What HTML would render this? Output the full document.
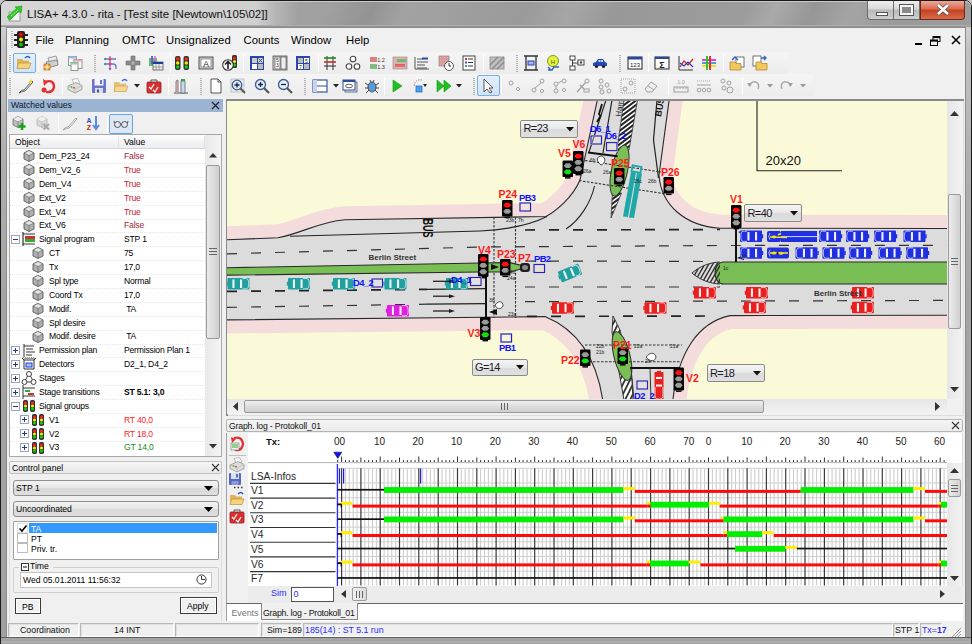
<!DOCTYPE html>
<html><head><meta charset="utf-8">
<style>
*{margin:0;padding:0;box-sizing:border-box}
html,body{width:972px;height:644px;overflow:hidden;background:#c6c6c6;font-family:"Liberation Sans",sans-serif;position:relative}
.a{position:absolute}
.t{white-space:nowrap;line-height:1;color:#000}
svg{overflow:visible}
svg text{font-family:"Liberation Sans",sans-serif}
</style></head><body>
<div class="a" style="left:0px;top:0px;width:972px;height:644px;background:linear-gradient(#dcdcdc,#d4d4d4 20px,#c4c4c4 45px,#b0b0b0 150px,#a4a4a4 300px,#a0a0a0);border:1px solid #1a1a1a;border-radius:7px 7px 0 0"></div>
<div class="a" style="left:1px;top:1px;width:970px;height:26px;background:linear-gradient(115deg,#a8a8a8 0,#a0a0a0 300px,#939393 340px,#a2a2a2 370px,#9a9a9a 480px,#a6a6a6 520px,#989898 560px,#9c9c9c 680px,#aaaaaa 705px,#969696 740px,#a4a4a4 775px,#9a9a9a 820px,#a0a0a0 972px);border-radius:6px 6px 0 0;box-shadow:inset 0 1px 0 #c8c8c8"></div>
<div class="a" style="left:1px;top:1px;width:300px;height:26px;background:linear-gradient(90deg,rgba(214,214,214,1) 0,rgba(210,210,210,.95) 255px,rgba(200,200,200,.5) 275px,rgba(160,160,160,0) 298px);border-radius:6px 0 0 0"></div>
<div class="a" style="left:1px;top:25px;width:970px;height:2px;background:linear-gradient(#b8b8b8,#8a8a8a)"></div>
<div class="a" style="left:867px;top:1px;width:27px;height:19px;background:linear-gradient(#eeeeee,#d8d8d8 45%,#b9b9b9 50%,#cfcfcf);border:1px solid #6c6c6c;border-top:none;border-radius:0 0 0 4px"></div>
<div class="a" style="left:876px;top:12px;width:12px;height:4px;background:#fff;border:1px solid #555"></div>
<div class="a" style="left:893px;top:1px;width:27px;height:19px;background:linear-gradient(#eeeeee,#d8d8d8 45%,#b9b9b9 50%,#cfcfcf);border:1px solid #6c6c6c;border-top:none"></div>
<div class="a" style="left:900px;top:5px;width:13px;height:10px;background:#8a8a8a;border:2px solid #f4f4f4;box-shadow:0 0 0 1px #555"></div>
<div class="a" style="left:920px;top:1px;width:45px;height:19px;background:linear-gradient(#eba99b,#dc6a50 45%,#c5401f 50%,#d76b4d);border:1px solid #70281a;border-top:none;border-radius:0 0 4px 0"></div>
<svg class="a" style="left:936px;top:3px" width="14" height="13" viewBox="0 0 14 13"><path d="M2 2 L12 11 M12 2 L2 11" stroke="#555" stroke-width="4.2"/><path d="M2 2 L12 11 M12 2 L2 11" stroke="#fff" stroke-width="2.6"/></svg>
<svg class="a" style="left:7px;top:6px" width="17" height="16" viewBox="0 0 17 16"><rect x="2" y="6" width="11" height="9" fill="#f2f2f2" stroke="#888" stroke-width=".8"/><path d="M0 11 L10 2 L8 1 L15 0 L14 7 L12 5 L3 14 Z" fill="#2ecc22" stroke="#1a9a10" stroke-width=".6"/><path d="M4 10 L11 4" stroke="#bff5b0" stroke-width="1" stroke-dasharray="2 1.5"/></svg>
<div class="a t" style="left:27px;top:8.5px;font-size:11.5px;color:#111">LISA+ 4.3.0 - rita - [Test site [Newtown\105\02]]</div>
<div class="a" style="left:6px;top:27px;width:960px;height:612px;background:#f0f0f0;border:1px solid #8a8a8a;border-bottom:none"></div>
<div class="a" style="left:7px;top:28px;width:958px;height:22px;background:#f0f0f0"></div>
<svg class="a" style="left:10px;top:31px" width="5" height="17" viewBox="0 0 5 17"><rect x="1" y="0" width="2" height="1" fill="#b8b8b8"/><rect x="1" y="2" width="2" height="1" fill="#b8b8b8"/><rect x="1" y="4" width="2" height="1" fill="#b8b8b8"/><rect x="1" y="6" width="2" height="1" fill="#b8b8b8"/><rect x="1" y="8" width="2" height="1" fill="#b8b8b8"/><rect x="1" y="10" width="2" height="1" fill="#b8b8b8"/><rect x="1" y="12" width="2" height="1" fill="#b8b8b8"/><rect x="1" y="14" width="2" height="1" fill="#b8b8b8"/><rect x="1" y="16" width="2" height="1" fill="#b8b8b8"/></svg>
<svg class="a" style="left:14px;top:30px" width="14" height="19" viewBox="0 0 14 19"><rect x="3" y="1" width="8" height="17" rx="2" fill="#222"/><rect x="0" y="4" width="14" height="2" fill="#222"/><rect x="0" y="9" width="14" height="2" fill="#222"/><rect x="0" y="14" width="14" height="2" fill="#222"/><circle cx="7" cy="4.5" r="2" fill="#f00"/><circle cx="7" cy="9.5" r="2" fill="#ee0"/><circle cx="7" cy="14.5" r="2" fill="#0c0"/></svg>
<div class="a t" style="left:35.5px;top:34.5px;font-size:11.3px;">File</div>
<div class="a t" style="left:65px;top:34.5px;font-size:11.3px;">Planning</div>
<div class="a t" style="left:122px;top:34.5px;font-size:11.3px;">OMTC</div>
<div class="a t" style="left:166px;top:34.5px;font-size:11.3px;">Unsignalized</div>
<div class="a t" style="left:243.5px;top:34.5px;font-size:11.3px;">Counts</div>
<div class="a t" style="left:291px;top:34.5px;font-size:11.3px;">Window</div>
<div class="a t" style="left:346px;top:34.5px;font-size:11.3px;">Help</div>
<div class="a" style="left:915px;top:43px;width:7px;height:2px;background:#000"></div>
<svg class="a" style="left:930px;top:36px" width="11" height="10" viewBox="0 0 11 10"><rect x="3" y="0.5" width="7" height="5" fill="none" stroke="#000" stroke-width="1"/><rect x="3" y="0.5" width="7" height="1.6" fill="#000"/><rect x="0.5" y="4" width="7" height="5.5" fill="#f0f0f0" stroke="#000" stroke-width="1"/><rect x="0.5" y="4" width="7" height="1.6" fill="#000"/></svg>
<svg class="a" style="left:951px;top:35px" width="10" height="10" viewBox="0 0 10 10"><path d="M1 1 L9 9 M9 1 L1 9" stroke="#000" stroke-width="1.6"/></svg>
<div class="a" style="left:7px;top:51px;width:958px;height:1px;background:#f0f0f0"></div>
<div class="a" style="left:8px;top:52px;width:780px;height:22px;background:linear-gradient(#f5f5f5,#ececec)"></div>
<div class="a" style="left:8px;top:74px;width:805px;height:22px;background:linear-gradient(#f5f5f5,#ececec)"></div>
<div class="a" style="left:13px;top:53px;width:23px;height:20px;background:linear-gradient(#e4f0fb,#cfe3f7);border:1px solid #7aaee0;border-radius:2px"></div>
<div class="a" style="left:477px;top:75px;width:23px;height:21px;background:linear-gradient(#e4f0fb,#cfe3f7);border:1px solid #7aaee0;border-radius:2px"></div>
<svg class="a" style="left:8px;top:54px" width="4" height="18" viewBox="0 0 4 18"><rect x="1" y="1" width="2" height="1" fill="#b0b0b0"/><rect x="1" y="3" width="2" height="1" fill="#b0b0b0"/><rect x="1" y="5" width="2" height="1" fill="#b0b0b0"/><rect x="1" y="7" width="2" height="1" fill="#b0b0b0"/><rect x="1" y="9" width="2" height="1" fill="#b0b0b0"/><rect x="1" y="11" width="2" height="1" fill="#b0b0b0"/><rect x="1" y="13" width="2" height="1" fill="#b0b0b0"/><rect x="1" y="15" width="2" height="1" fill="#b0b0b0"/><rect x="1" y="17" width="2" height="1" fill="#b0b0b0"/></svg>
<svg class="a" style="left:16px;top:55px" width="16" height="16" viewBox="0 0 16 16"><path d="M1 4 L6 4 L7 5.5 L13 5.5 L13 13 L1 13Z" fill="#e0b45a"/><path d="M2.5 8 L15 8 L13 13.5 L1 13.5Z" fill="#f6d37e" stroke="#c0902e" stroke-width=".7"/><path d="M9 3 Q12 0 14 3" stroke="#2a5ad8" fill="none" stroke-width="1.4"/></svg>
<div class="a" style="left:38px;top:54px;width:1px;height:18px;background:#c4c4c4;border-right:1px solid #fff"></div>
<svg class="a" style="left:43px;top:55px" width="16" height="16" viewBox="0 0 16 16"><path d="M5 3 L13 1 L15 7 L7 10Z" fill="#e8e8e8" stroke="#888" stroke-width=".8"/><path d="M3 7 L14 5 L15 10 L5 13Z" fill="#cfcfcf" stroke="#777" stroke-width=".8"/><rect x="1" y="9" width="6" height="6" fill="#f0a030" stroke="#a06010" stroke-width=".6"/><path d="M4 9 V15 M1 12 H7" stroke="#fff" stroke-width=".8"/></svg>
<svg class="a" style="left:67px;top:55px" width="16" height="16" viewBox="0 0 16 16"><rect x="1.5" y="1.5" width="8" height="9" fill="#f4f6fb" stroke="#8a8a8a" stroke-width=".9"/><rect x="1.5" y="1.5" width="8" height="2" fill="#a8b8e8"/><rect x="7" y="4.5" width="8" height="9" fill="#fbf4f6" stroke="#8a8a8a" stroke-width=".9"/><rect x="7" y="4.5" width="8" height="2" fill="#e8a8c0"/><rect x="4" y="7.5" width="7" height="8" fill="#f8fbf6" stroke="#8a8a8a" stroke-width=".9"/><rect x="4" y="7.5" width="7" height="2" fill="#90d890"/></svg>
<svg class="a" style="left:93px;top:54px" width="4" height="18" viewBox="0 0 4 18"><rect x="1" y="1" width="2" height="1" fill="#b0b0b0"/><rect x="1" y="3" width="2" height="1" fill="#b0b0b0"/><rect x="1" y="5" width="2" height="1" fill="#b0b0b0"/><rect x="1" y="7" width="2" height="1" fill="#b0b0b0"/><rect x="1" y="9" width="2" height="1" fill="#b0b0b0"/><rect x="1" y="11" width="2" height="1" fill="#b0b0b0"/><rect x="1" y="13" width="2" height="1" fill="#b0b0b0"/><rect x="1" y="15" width="2" height="1" fill="#b0b0b0"/><rect x="1" y="17" width="2" height="1" fill="#b0b0b0"/></svg>
<svg class="a" style="left:102px;top:55px" width="16" height="16" viewBox="0 0 16 16"><path d="M8 1 V15 M2 4 H14 M2 9 H11 Q14 9 14 12 V14" stroke="#6a78c8" fill="none" stroke-width="1.3"/><path d="M2 4 L4 2.5 V5.5Z M2 9 L4 7.5 V10.5Z" fill="#1aa0a0"/><circle cx="8" cy="4" r="1.6" fill="#f04060"/><circle cx="8" cy="9" r="1.6" fill="#f04060"/><path d="M6.5 13 L8 15.5 L9.5 13Z" fill="#a040c0"/></svg>
<svg class="a" style="left:125px;top:55px" width="16" height="16" viewBox="0 0 16 16"><path d="M6 1 H10 V6 H15 V10 H10 V15 H6 V10 H1 V6 H6Z" fill="#8a8a8a" stroke="#6a6a6a" stroke-width=".6"/><rect x="6.5" y="6.5" width="3" height="3" fill="#b0b0b0"/></svg>
<svg class="a" style="left:148px;top:55px" width="16" height="16" viewBox="0 0 16 16"><path d="M1 3 H9 V11 H1Z" fill="#60c060"/><path d="M4 1 V9" stroke="#6060e0" stroke-width="2"/><path d="M7 1 V9" stroke="#e060e0" stroke-width="1.5"/><rect x="5" y="7" width="10" height="8" fill="#eee" stroke="#555" stroke-width=".8"/><rect x="5" y="7" width="10" height="2" fill="#2040a0"/><path d="M8 9 V15 M11 9 V15 M5 12 H15" stroke="#777" stroke-width=".6"/></svg>
<div class="a" style="left:170px;top:54px;width:1px;height:18px;background:#c4c4c4;border-right:1px solid #fff"></div>
<svg class="a" style="left:174px;top:55px" width="16" height="16" viewBox="0 0 16 16"><rect x="1" y="1" width="5.5" height="14" rx="2" fill="#333"/><rect x="9.5" y="1" width="5.5" height="14" rx="2" fill="#333"/><circle cx="3.7" cy="4" r="1.7" fill="#f22"/><circle cx="3.7" cy="8" r="1.7" fill="#ee0"/><circle cx="3.7" cy="12" r="1.7" fill="#1c1"/><circle cx="12.3" cy="4" r="1.7" fill="#f22"/><circle cx="12.3" cy="8" r="1.7" fill="#ee0"/><circle cx="12.3" cy="12" r="1.7" fill="#1c1"/></svg>
<svg class="a" style="left:198px;top:55px" width="16" height="16" viewBox="0 0 16 16"><rect x="1" y="2" width="14" height="12" fill="#d0d0d0" stroke="#555" stroke-width="1"/><rect x="3" y="4" width="10" height="8" fill="#fff" stroke="#666" stroke-width=".6"/><text x="8" y="11.5" font-size="8.5" text-anchor="middle" font-family="Liberation Sans" fill="#222">A</text></svg>
<svg class="a" style="left:222px;top:55px" width="16" height="16" viewBox="0 0 16 16"><rect x="10" y="0" width="5" height="13" rx="1.5" fill="#333"/><circle cx="12.5" cy="3" r="1.6" fill="#f22"/><circle cx="12.5" cy="6.5" r="1.6" fill="#ee0"/><circle cx="12.5" cy="10" r="1.6" fill="#1c1"/><circle cx="6" cy="10" r="5.3" fill="#fff" stroke="#333" stroke-width="1.1"/><path d="M6 14 V7 M3 9.5 L6 6.5 L9 9.5" stroke="#222" stroke-width="1.6" fill="none"/></svg>
<div class="a" style="left:243px;top:54px;width:1px;height:18px;background:#c4c4c4;border-right:1px solid #fff"></div>
<svg class="a" style="left:249px;top:55px" width="16" height="16" viewBox="0 0 16 16"><rect x="1" y="1" width="14" height="14" fill="#2848a8"/><rect x="3" y="3" width="5" height="5" fill="#ccc"/><rect x="9" y="3" width="5" height="5" fill="#ddd"/><rect x="3" y="9" width="5" height="5" fill="#fff"/><rect x="9" y="9" width="5" height="5" fill="#bbb"/><path d="M9.5 3.5 L13.5 7.5 M13.5 3.5 L9.5 7.5" stroke="#222" stroke-width=".8"/></svg>
<svg class="a" style="left:272px;top:55px" width="16" height="16" viewBox="0 0 16 16"><rect x="1" y="1" width="14" height="14" fill="#ccc" stroke="#555" stroke-width=".8"/><rect x="3" y="2" width="5" height="12" fill="#fff" stroke="#444" stroke-width=".6"/><rect x="9" y="2" width="5" height="12" fill="#eee" stroke="#444" stroke-width=".6"/><text x="5.5" y="7" font-size="5" text-anchor="middle" fill="#222">5</text><text x="5.5" y="12" font-size="5" text-anchor="middle" fill="#222">3</text></svg>
<svg class="a" style="left:295px;top:55px" width="16" height="16" viewBox="0 0 16 16"><rect x="1" y="1" width="14" height="14" fill="#2848a8"/><rect x="3" y="3" width="5" height="5" fill="#bbb"/><rect x="9" y="3" width="5" height="5" fill="#fff"/><rect x="3" y="9" width="5" height="5" fill="#fff"/><rect x="9" y="9" width="5" height="5" fill="#bbb"/><text x="11.5" y="7.6" font-size="5" text-anchor="middle" fill="#222">5</text><text x="5.5" y="13.6" font-size="5" text-anchor="middle" fill="#222">7</text></svg>
<div class="a" style="left:318px;top:54px;width:1px;height:18px;background:#c4c4c4;border-right:1px solid #fff"></div>
<svg class="a" style="left:322px;top:55px" width="16" height="16" viewBox="0 0 16 16"><path d="M2 3 H14 M2 7 H14 M2 11 H14 M5 1 V15 M11 1 V15" stroke="#2a2a2a" stroke-width="1"/><path d="M2 3 H14" stroke="#30a030" stroke-width="1.6"/><path d="M2 7 H14" stroke="#e04040" stroke-width="1.4"/></svg>
<svg class="a" style="left:345px;top:55px" width="16" height="16" viewBox="0 0 16 16"><circle cx="8" cy="4" r="2.8" fill="#fff" stroke="#444" stroke-width="1.1"/><circle cx="4" cy="11.5" r="2.8" fill="#fff" stroke="#444" stroke-width="1.1"/><circle cx="12" cy="11.5" r="2.8" fill="#fff" stroke="#444" stroke-width="1.1"/></svg>
<svg class="a" style="left:369px;top:55px" width="16" height="16" viewBox="0 0 16 16"><rect x="1" y="2" width="7" height="5" fill="#e08080"/><rect x="1" y="9" width="7" height="5" fill="#80c080"/><path d="M1 4 H8 M1 11 H8" stroke="#999" stroke-width=".6"/><text x="12" y="7" font-size="5.5" text-anchor="middle" fill="#333">1.2</text><text x="12" y="14" font-size="5.5" text-anchor="middle" fill="#333">1.3</text></svg>
<svg class="a" style="left:392px;top:55px" width="16" height="16" viewBox="0 0 16 16"><rect x="1" y="2" width="14" height="12" fill="#e8b0b0" stroke="#888" stroke-width=".6"/><rect x="5" y="4" width="9" height="3" fill="#60c060"/><rect x="3" y="9" width="10" height="3" fill="#e06060"/><path d="M1 5 H15 M1 8 H15 M1 11 H15" stroke="#aaa" stroke-width=".5"/></svg>
<svg class="a" style="left:414px;top:55px" width="16" height="16" viewBox="0 0 16 16"><path d="M1 2 V14 H15" stroke="#555" stroke-width="1" fill="none"/><path d="M3 4 H9 M3 7 H14 M3 10 H11 M3 13 H13" stroke="#555" stroke-width="1"/><rect x="8" y="2.5" width="6" height="2" fill="#2a4aa8"/></svg>
<svg class="a" style="left:438px;top:55px" width="16" height="16" viewBox="0 0 16 16"><rect x="1" y="1" width="10" height="10" fill="#e8a0a0" stroke="#777" stroke-width=".6"/><path d="M1 4 H11 M1 7 H11" stroke="#999" stroke-width=".5"/><circle cx="11" cy="11" r="4.5" fill="#fff" stroke="#555" stroke-width="1"/><path d="M11 8 V11 H13" stroke="#333" stroke-width="1" fill="none"/></svg>
<svg class="a" style="left:461px;top:55px" width="16" height="16" viewBox="0 0 16 16"><rect x="2" y="1" width="12" height="14" fill="#fff" stroke="#444" stroke-width="1"/><path d="M7 4 H12 M7 7.5 H12 M7 11 H12" stroke="#333" stroke-width="1"/><rect x="4" y="3" width="2" height="2" fill="#d03030"/><rect x="4" y="6.5" width="2" height="2" fill="#3050d0"/><rect x="4" y="10" width="2" height="2" fill="#30a0a0"/></svg>
<div class="a" style="left:483px;top:54px;width:1px;height:18px;background:#c4c4c4;border-right:1px solid #fff"></div>
<svg class="a" style="left:489px;top:55px" width="16" height="16" viewBox="0 0 16 16"><rect x="1" y="2" width="14" height="12" fill="#c0c0c0" stroke="#888" stroke-width=".8"/><path d="M1 10 L9 2 M3 14 L15 2 M8 14 L15 7" stroke="#888" stroke-width="1.3"/></svg>
<svg class="a" style="left:515px;top:54px" width="4" height="18" viewBox="0 0 4 18"><rect x="1" y="1" width="2" height="1" fill="#b0b0b0"/><rect x="1" y="3" width="2" height="1" fill="#b0b0b0"/><rect x="1" y="5" width="2" height="1" fill="#b0b0b0"/><rect x="1" y="7" width="2" height="1" fill="#b0b0b0"/><rect x="1" y="9" width="2" height="1" fill="#b0b0b0"/><rect x="1" y="11" width="2" height="1" fill="#b0b0b0"/><rect x="1" y="13" width="2" height="1" fill="#b0b0b0"/><rect x="1" y="15" width="2" height="1" fill="#b0b0b0"/><rect x="1" y="17" width="2" height="1" fill="#b0b0b0"/></svg>
<svg class="a" style="left:523px;top:55px" width="16" height="16" viewBox="0 0 16 16"><path d="M1 1 H15 M1 15 H15 M3 1 V15 M13 1 V15" stroke="#333" stroke-width="1.3"/><rect x="5" y="6" width="6" height="4" fill="#a0b8f0" stroke="#2040c0" stroke-width="1"/></svg>
<svg class="a" style="left:545px;top:55px" width="16" height="16" viewBox="0 0 16 16"><circle cx="8" cy="6" r="5.5" fill="#e8f040" stroke="#7a9a20" stroke-width="1"/><text x="8" y="8.5" font-size="6" text-anchor="middle" fill="#2a6a20">H</text><path d="M3 12 L6 15 M3 15 H7 L9 12 H14" stroke="#3060c0" stroke-width="1.4" fill="none"/></svg>
<svg class="a" style="left:569px;top:55px" width="16" height="16" viewBox="0 0 16 16"><rect x="1" y="1" width="5" height="4" fill="#fff" stroke="#333" stroke-width=".9"/><rect x="9" y="5" width="6" height="5" fill="#fff" stroke="#333" stroke-width=".9"/><rect x="1" y="11" width="5" height="4" fill="#fff" stroke="#333" stroke-width=".9"/><path d="M3.5 5 V11 M3.5 8 H9" stroke="#333" stroke-width=".9"/><circle cx="12" cy="7.5" r="1.2" fill="#444"/></svg>
<svg class="a" style="left:592px;top:55px" width="16" height="16" viewBox="0 0 16 16"><path d="M1 11 V8 L4 7 L6 4 H11 L13 7 L15 8 V11Z" fill="#2848b8"/><rect x="6.5" y="5" width="2" height="2" fill="#cde"/><rect x="9" y="5" width="2" height="2" fill="#cde"/><circle cx="4.5" cy="11.5" r="1.6" fill="#222"/><circle cx="11.5" cy="11.5" r="1.6" fill="#222"/></svg>
<svg class="a" style="left:618px;top:54px" width="4" height="18" viewBox="0 0 4 18"><rect x="1" y="1" width="2" height="1" fill="#b0b0b0"/><rect x="1" y="3" width="2" height="1" fill="#b0b0b0"/><rect x="1" y="5" width="2" height="1" fill="#b0b0b0"/><rect x="1" y="7" width="2" height="1" fill="#b0b0b0"/><rect x="1" y="9" width="2" height="1" fill="#b0b0b0"/><rect x="1" y="11" width="2" height="1" fill="#b0b0b0"/><rect x="1" y="13" width="2" height="1" fill="#b0b0b0"/><rect x="1" y="15" width="2" height="1" fill="#b0b0b0"/><rect x="1" y="17" width="2" height="1" fill="#b0b0b0"/></svg>
<svg class="a" style="left:627px;top:55px" width="16" height="16" viewBox="0 0 16 16"><rect x="1" y="2" width="14" height="12" fill="#fff" stroke="#333" stroke-width="1.1"/><rect x="1" y="2" width="14" height="2.5" fill="#2848a8"/><text x="8" y="12" font-size="6" text-anchor="middle" fill="#222">123</text></svg>
<div class="a" style="left:648px;top:54px;width:1px;height:18px;background:#c4c4c4;border-right:1px solid #fff"></div>
<svg class="a" style="left:654px;top:55px" width="16" height="16" viewBox="0 0 16 16"><rect x="1" y="2" width="14" height="12" fill="#fff" stroke="#333" stroke-width="1.1"/><rect x="1" y="2" width="14" height="2" fill="#2848a8"/><text x="8" y="13" font-size="9" font-weight="bold" text-anchor="middle" fill="#222">Σ</text></svg>
<svg class="a" style="left:678px;top:55px" width="16" height="16" viewBox="0 0 16 16"><path d="M1 1 V15 H15" stroke="#333" stroke-width="1" fill="none"/><path d="M2 12 L6 6 L10 10 L15 4" stroke="#d02020" stroke-width="1.2" fill="none"/><path d="M2 8 L6 11 L10 7 L15 12" stroke="#2040c0" stroke-width="1.2" fill="none"/></svg>
<svg class="a" style="left:701px;top:55px" width="16" height="16" viewBox="0 0 16 16"><path d="M1 5 H15" stroke="#e040e0" stroke-width="2"/><path d="M1 8 H15" stroke="#40a0e0" stroke-width="2"/><path d="M1 11 H15" stroke="#f0e020" stroke-width="2"/><path d="M6 1 V15" stroke="#30c030" stroke-width="2"/><path d="M9 1 V15" stroke="#e03030" stroke-width="2"/></svg>
<div class="a" style="left:723px;top:54px;width:1px;height:18px;background:#c4c4c4;border-right:1px solid #fff"></div>
<svg class="a" style="left:729px;top:55px" width="16" height="16" viewBox="0 0 16 16"><rect x="7" y="2" width="8" height="10" fill="#fff" stroke="#555" stroke-width=".8"/><path d="M1 7 H6 L7 8.5 H12 V15 H1Z" fill="#f0c860" stroke="#b08020" stroke-width=".7"/><path d="M3 5 L6 2 L9 5" stroke="#3060d0" stroke-width="1.3" fill="none"/></svg>
<svg class="a" style="left:752px;top:55px" width="16" height="16" viewBox="0 0 16 16"><rect x="1" y="1" width="8" height="10" fill="#fff" stroke="#555" stroke-width=".8"/><path d="M4 7 H9 L10 8.5 H15 V15 H4Z" fill="#f0c860" stroke="#b08020" stroke-width=".7"/><path d="M9 3 H14 M12 1 L14 3 L12 5" stroke="#3060d0" stroke-width="1.3" fill="none"/></svg>
<svg class="a" style="left:8px;top:76.5px" width="4" height="18" viewBox="0 0 4 18"><rect x="1" y="1" width="2" height="1" fill="#b0b0b0"/><rect x="1" y="3" width="2" height="1" fill="#b0b0b0"/><rect x="1" y="5" width="2" height="1" fill="#b0b0b0"/><rect x="1" y="7" width="2" height="1" fill="#b0b0b0"/><rect x="1" y="9" width="2" height="1" fill="#b0b0b0"/><rect x="1" y="11" width="2" height="1" fill="#b0b0b0"/><rect x="1" y="13" width="2" height="1" fill="#b0b0b0"/><rect x="1" y="15" width="2" height="1" fill="#b0b0b0"/><rect x="1" y="17" width="2" height="1" fill="#b0b0b0"/></svg>
<svg class="a" style="left:18px;top:78px" width="16" height="16" viewBox="0 0 16 16"><path d="M1 15 Q4 11 6 12 L14 3 L15 4 L7 13 Q5 13 1 15" fill="#fff" stroke="#444" stroke-width=".9"/><path d="M11 5 L14 2" stroke="#f0e020" stroke-width="2"/></svg>
<svg class="a" style="left:40px;top:78px" width="16" height="16" viewBox="0 0 16 16"><path d="M5 4 Q14 1 14 9 Q13 15 6 14" stroke="#e03030" stroke-width="2.4" fill="none"/><path d="M3 1 L8 4 L4 8Z" fill="#e03030"/><circle cx="4" cy="12" r="2.5" fill="#e03030"/></svg>
<div class="a" style="left:62px;top:76.5px;width:1px;height:18px;background:#c4c4c4;border-right:1px solid #fff"></div>
<svg class="a" style="left:67px;top:78px" width="16" height="16" viewBox="0 0 16 16"><path d="M5 1.5 L10.5 0.5 L13 5 L7.5 6.5Z" fill="#fafafa" stroke="#999" stroke-width=".6"/><path d="M1 8 L9 4.5 L15 7.5 L15 11.5 L8 15 L1 11.5Z" fill="#dedede" stroke="#8a8a8a" stroke-width=".7"/><path d="M1 8 L8 11 L15 7.5 M8 11 V15" stroke="#b0b0b0" stroke-width=".6" fill="none"/><circle cx="4.5" cy="8.8" r=".9" fill="#3c3"/><circle cx="7" cy="9.6" r=".9" fill="#e33"/></svg>
<svg class="a" style="left:91px;top:78px" width="16" height="16" viewBox="0 0 16 16"><rect x="1" y="1" width="14" height="14" rx="1" fill="#6a74c8"/><rect x="3.5" y="1" width="9" height="6.5" fill="#f4f4fa"/><rect x="9" y="2" width="2" height="4" fill="#6a74c8"/><rect x="4" y="10" width="8" height="5" fill="#d8dcf0"/><rect x="6" y="11.5" width="2" height="3" fill="#555"/></svg>
<svg class="a" style="left:113px;top:78px" width="16" height="16" viewBox="0 0 16 16"><path d="M1 4 L6 4 L7 5.5 L13 5.5 L13 13 L1 13Z" fill="#e3c27c"/><path d="M2.5 8 L15 8 L13 13.5 L1 13.5Z" fill="#f3d892" stroke="#c9a150" stroke-width=".7"/><path d="M9 3 Q12 0 14 3" stroke="#3a6ae0" fill="none" stroke-width="1.4"/></svg>
<svg class="a" style="left:134px;top:83.5px" width="6" height="4" viewBox="0 0 6 4"><path d="M0 0 L6 0 L3 3.5Z" fill="#222"/></svg>
<svg class="a" style="left:146px;top:78px" width="16" height="16" viewBox="0 0 16 16"><rect x="1" y="4" width="14" height="11" rx="1" fill="#d83030" stroke="#902020" stroke-width=".8"/><path d="M5 4 V2 H11 V4" stroke="#555" stroke-width="1" fill="none"/><path d="M3 9 L5 11 L8 6 M7 12 L9 14 L12 9" stroke="#fff" stroke-width="1.2" fill="none"/></svg>
<div class="a" style="left:168px;top:76.5px;width:1px;height:18px;background:#c4c4c4;border-right:1px solid #fff"></div>
<svg class="a" style="left:173px;top:78px" width="16" height="16" viewBox="0 0 16 16"><path d="M1 15 H15" stroke="#555" stroke-width="1"/><path d="M3 15 V4 Q3 2 5 2 V15" fill="#f4c0c8" stroke="#666" stroke-width=".8"/><rect x="8" y="3" width="4" height="12" fill="#c8d8f0" stroke="#666" stroke-width=".8"/><rect x="8" y="1" width="4" height="2" fill="#30b030"/></svg>
<svg class="a" style="left:199px;top:76.5px" width="4" height="18" viewBox="0 0 4 18"><rect x="1" y="1" width="2" height="1" fill="#b0b0b0"/><rect x="1" y="3" width="2" height="1" fill="#b0b0b0"/><rect x="1" y="5" width="2" height="1" fill="#b0b0b0"/><rect x="1" y="7" width="2" height="1" fill="#b0b0b0"/><rect x="1" y="9" width="2" height="1" fill="#b0b0b0"/><rect x="1" y="11" width="2" height="1" fill="#b0b0b0"/><rect x="1" y="13" width="2" height="1" fill="#b0b0b0"/><rect x="1" y="15" width="2" height="1" fill="#b0b0b0"/><rect x="1" y="17" width="2" height="1" fill="#b0b0b0"/></svg>
<svg class="a" style="left:208px;top:78px" width="16" height="16" viewBox="0 0 16 16"><path d="M3 1 H10 L13 4 V15 H3Z" fill="#fff" stroke="#444" stroke-width=".9"/><path d="M10 1 V4 H13" stroke="#444" stroke-width=".9" fill="none"/></svg>
<svg class="a" style="left:230px;top:78px" width="16" height="16" viewBox="0 0 16 16"><rect x="1" y="1" width="13" height="13" fill="#eaeaea" stroke="#aaa" stroke-width=".6"/><circle cx="7" cy="7" r="4.8" fill="#d8e8f8" stroke="#3a5a9a" stroke-width="1.3"/><path d="M7 4.5 V9.5 M4.5 7 H9.5" stroke="#223" stroke-width="1.3"/><path d="M10.5 10.5 L15 15" stroke="#555" stroke-width="2"/></svg>
<svg class="a" style="left:254px;top:78px" width="16" height="16" viewBox="0 0 16 16"><circle cx="6.5" cy="6.5" r="5" fill="#e4eef8" stroke="#3a5a9a" stroke-width="1.3"/><path d="M6.5 4 V9 M4 6.5 H9" stroke="#223" stroke-width="1.3"/><path d="M10 10 L15 15" stroke="#555" stroke-width="2.2"/></svg>
<svg class="a" style="left:277px;top:78px" width="16" height="16" viewBox="0 0 16 16"><circle cx="6.5" cy="6.5" r="5" fill="#e4eef8" stroke="#3a5a9a" stroke-width="1.3"/><path d="M4 6.5 H9" stroke="#223" stroke-width="1.3"/><path d="M10 10 L15 15" stroke="#555" stroke-width="2.2"/></svg>
<svg class="a" style="left:303px;top:76.5px" width="4" height="18" viewBox="0 0 4 18"><rect x="1" y="1" width="2" height="1" fill="#b0b0b0"/><rect x="1" y="3" width="2" height="1" fill="#b0b0b0"/><rect x="1" y="5" width="2" height="1" fill="#b0b0b0"/><rect x="1" y="7" width="2" height="1" fill="#b0b0b0"/><rect x="1" y="9" width="2" height="1" fill="#b0b0b0"/><rect x="1" y="11" width="2" height="1" fill="#b0b0b0"/><rect x="1" y="13" width="2" height="1" fill="#b0b0b0"/><rect x="1" y="15" width="2" height="1" fill="#b0b0b0"/><rect x="1" y="17" width="2" height="1" fill="#b0b0b0"/></svg>
<svg class="a" style="left:312px;top:78px" width="16" height="16" viewBox="0 0 16 16"><rect x="1" y="2" width="14" height="12" fill="#fff" stroke="#2a4a9a" stroke-width="1.1"/><rect x="1" y="2" width="4" height="12" fill="#c8d4ee"/><path d="M5 8 H15" stroke="#2a4a9a" stroke-width="1"/></svg>
<svg class="a" style="left:333px;top:83.5px" width="6" height="4" viewBox="0 0 6 4"><path d="M0 0 L6 0 L3 3.5Z" fill="#222"/></svg>
<svg class="a" style="left:342px;top:78px" width="16" height="16" viewBox="0 0 16 16"><rect x="3" y="4" width="12" height="10" fill="#dde6f5" stroke="#556" stroke-width=".8"/><rect x="1" y="2" width="12" height="10" fill="#fff" stroke="#2a4a9a" stroke-width="1"/><rect x="1" y="2" width="12" height="2" fill="#2a4a9a"/><ellipse cx="7" cy="8" rx="3.5" ry="1.8" fill="none" stroke="#333" stroke-width=".8"/></svg>
<svg class="a" style="left:364px;top:78px" width="16" height="16" viewBox="0 0 16 16"><ellipse cx="8" cy="9" rx="4" ry="5" fill="#5a9ad8" stroke="#333" stroke-width=".8"/><path d="M1 5 L4 7 M15 5 L12 7 M1 10 H4 M15 10 H12 M2 15 L5 12 M14 15 L11 12 M6 2 L7 4 M10 2 L9 4" stroke="#333" stroke-width=".9"/></svg>
<div class="a" style="left:384px;top:76.5px;width:1px;height:18px;background:#c4c4c4;border-right:1px solid #fff"></div>
<svg class="a" style="left:389px;top:78px" width="16" height="16" viewBox="0 0 16 16"><path d="M4 2 L13 8 L4 14Z" fill="#20c020" stroke="#189018" stroke-width=".6"/></svg>
<svg class="a" style="left:412px;top:78px" width="16" height="16" viewBox="0 0 16 16"><path d="M2 8 Q3 1 10 2" stroke="#888" stroke-width="1" stroke-dasharray="1.5 1" fill="none"/><rect x="4" y="8" width="6" height="6" fill="#4aa0f0" stroke="#2060b0" stroke-width=".7"/><path d="M11 6 L15 6 L13 9Z" fill="#222"/></svg>
<svg class="a" style="left:436px;top:78px" width="16" height="16" viewBox="0 0 16 16"><path d="M1 2 L8 8 L1 14Z M8 2 L15 8 L8 14Z" fill="#20c020" stroke="#189018" stroke-width=".6"/></svg>
<svg class="a" style="left:456px;top:83.5px" width="6" height="4" viewBox="0 0 6 4"><path d="M0 0 L6 0 L3 3.5Z" fill="#222"/></svg>
<svg class="a" style="left:472px;top:76.5px" width="4" height="18" viewBox="0 0 4 18"><rect x="1" y="1" width="2" height="1" fill="#b0b0b0"/><rect x="1" y="3" width="2" height="1" fill="#b0b0b0"/><rect x="1" y="5" width="2" height="1" fill="#b0b0b0"/><rect x="1" y="7" width="2" height="1" fill="#b0b0b0"/><rect x="1" y="9" width="2" height="1" fill="#b0b0b0"/><rect x="1" y="11" width="2" height="1" fill="#b0b0b0"/><rect x="1" y="13" width="2" height="1" fill="#b0b0b0"/><rect x="1" y="15" width="2" height="1" fill="#b0b0b0"/><rect x="1" y="17" width="2" height="1" fill="#b0b0b0"/></svg>
<svg class="a" style="left:480px;top:78px" width="16" height="16" viewBox="0 0 16 16"><path d="M4 1 V14 L7 11 L10 15 L12 14 L9 10 H13Z" fill="#fff" stroke="#444" stroke-width=".9"/></svg>
<div class="a" style="left:501px;top:76.5px;width:1px;height:18px;background:#c4c4c4;border-right:1px solid #fff"></div>
<svg class="a" style="left:507px;top:78px" width="16" height="16" viewBox="0 0 16 16"><circle cx="4" cy="5" r="2" fill="none" stroke="#a0a0a0"/><path d="M11 9 L13 11 L11 13 L9 11Z" fill="none" stroke="#a0a0a0"/></svg>
<svg class="a" style="left:530px;top:78px" width="16" height="16" viewBox="0 0 16 16"><circle cx="12" cy="3" r="2" fill="none" stroke="#a0a0a0"/><circle cx="4" cy="12" r="2" fill="none" stroke="#a0a0a0"/><path d="M5 10 L11 5" stroke="#a0a0a0"/><path d="M12 11 L14 13 L12 15 L10 13Z" fill="none" stroke="#a0a0a0"/></svg>
<svg class="a" style="left:552px;top:78px" width="16" height="16" viewBox="0 0 16 16"><circle cx="12" cy="3" r="2" fill="none" stroke="#a0a0a0"/><circle cx="4" cy="6" r="2" fill="none" stroke="#a0a0a0"/><circle cx="4" cy="13" r="2" fill="none" stroke="#a0a0a0"/><path d="M4 8 V11 M6 5 L10 3" stroke="#a0a0a0"/><path d="M12 10 L14 12 L12 14 L10 12Z" fill="none" stroke="#a0a0a0"/></svg>
<svg class="a" style="left:575px;top:78px" width="16" height="16" viewBox="0 0 16 16"><circle cx="12" cy="3" r="2" fill="none" stroke="#a0a0a0"/><path d="M2 14 L11 4 M5 7 L9 11" stroke="#a0a0a0" stroke-width="1.2"/><rect x="9" y="11" width="5" height="3" fill="none" stroke="#a0a0a0"/></svg>
<svg class="a" style="left:597px;top:78px" width="16" height="16" viewBox="0 0 16 16"><circle cx="4" cy="3" r="2" fill="none" stroke="#a0a0a0"/><circle cx="4" cy="9" r="2" fill="none" stroke="#a0a0a0"/><circle cx="10" cy="7" r="2" fill="none" stroke="#a0a0a0"/><circle cx="12" cy="13" r="2" fill="none" stroke="#a0a0a0"/><circle cx="5" cy="14" r="2" fill="none" stroke="#a0a0a0"/></svg>
<svg class="a" style="left:620px;top:78px" width="16" height="16" viewBox="0 0 16 16"><rect x="1" y="1" width="14" height="14" fill="none" stroke="#a0a0a0" stroke-dasharray="1 1"/><circle cx="5" cy="11" r="2" fill="none" stroke="#a0a0a0"/><circle cx="11" cy="5" r="2" fill="none" stroke="#a0a0a0"/></svg>
<svg class="a" style="left:643px;top:78px" width="16" height="16" viewBox="0 0 16 16"><path d="M2 11 L8 4 L14 8 L9 14 H4Z" fill="none" stroke="#a0a0a0"/><path d="M5 8 L11 12" stroke="#a0a0a0"/></svg>
<div class="a" style="left:668px;top:76.5px;width:1px;height:18px;background:#c4c4c4;border-right:1px solid #fff"></div>
<svg class="a" style="left:673px;top:78px" width="16" height="16" viewBox="0 0 16 16"><text x="8" y="6" font-size="5.5" text-anchor="middle" fill="#a0a0a0">1.0</text><rect x="1" y="9" width="14" height="5" fill="none" stroke="#a0a0a0"/><path d="M4 9 V11 M7 9 V11 M10 9 V11 M13 9 V11" stroke="#a0a0a0"/></svg>
<svg class="a" style="left:696px;top:78px" width="16" height="16" viewBox="0 0 16 16"><path d="M1 3 H15" stroke="#a0a0a0" stroke-dasharray="1 1"/><path d="M1 7 H15" stroke="#a0a0a0"/><circle cx="3" cy="12" r="1.8" fill="none" stroke="#a0a0a0"/><circle cx="8" cy="12" r="1.8" fill="none" stroke="#a0a0a0"/><circle cx="13" cy="12" r="1.8" fill="none" stroke="#a0a0a0"/></svg>
<svg class="a" style="left:719px;top:78px" width="16" height="16" viewBox="0 0 16 16"><circle cx="4" cy="3" r="2" fill="none" stroke="#a0a0a0"/><circle cx="10" cy="5" r="2" fill="none" stroke="#a0a0a0"/><circle cx="5" cy="10" r="2" fill="none" stroke="#a0a0a0"/><circle cx="11" cy="12" r="3" fill="none" stroke="#a0a0a0"/></svg>
<div class="a" style="left:742px;top:76.5px;width:1px;height:18px;background:#c4c4c4;border-right:1px solid #fff"></div>
<svg class="a" style="left:746px;top:78px" width="16" height="16" viewBox="0 0 16 16"><path d="M3 8 Q5 3 10 4 Q14 6 12 11" stroke="#a0a0a0" stroke-width="1.3" fill="none"/><path d="M1 5 L4 9 L6 5Z" fill="#a0a0a0"/></svg>
<svg class="a" style="left:767px;top:83.5px" width="6" height="4" viewBox="0 0 6 4"><path d="M0 0 L6 0 L3 3.5Z" fill="#999"/></svg>
<svg class="a" style="left:778px;top:78px" width="16" height="16" viewBox="0 0 16 16"><path d="M13 8 Q11 3 6 4 Q2 6 4 11" stroke="#a0a0a0" stroke-width="1.3" fill="none"/><path d="M15 5 L12 9 L10 5Z" fill="#a0a0a0"/></svg>
<svg class="a" style="left:800px;top:83.5px" width="6" height="4" viewBox="0 0 6 4"><path d="M0 0 L6 0 L3 3.5Z" fill="#999"/></svg>
<div class="a" style="left:8px;top:99px;width:215px;height:13px;background:#9ab4d1"></div>
<div class="a t" style="left:11px;top:101px;font-size:8.6px;color:#101828">Watched values</div>
<svg class="a" style="left:211px;top:101px" width="9" height="9" viewBox="0 0 9 9"><path d="M1 1 L8 8 M8 1 L1 8" stroke="#222" stroke-width="1.2"/></svg>
<svg class="a" style="left:11px;top:115px" width="16" height="16" viewBox="0 0 16 16"><path d="M2 4 L7 1.5 L12 4 L12 10 L7 12.5 L2 10Z" fill="#bdbdbd" stroke="#6a6a6a" stroke-width=".8"/><path d="M2 4 L7 6.5 L12 4 M7 6.5 V12.5" stroke="#6a6a6a" stroke-width=".7" fill="none"/><path d="M2 4 L7 1.5 L12 4 L7 6.5Z" fill="#ececec"/><path d="M11 8 V15 M7.5 11.5 H14.5" stroke="#1aa01a" stroke-width="2.6"/></svg>
<svg class="a" style="left:35px;top:115px" width="16" height="16" viewBox="0 0 16 16"><g opacity=".45"><path d="M2 4 L7 1.5 L12 4 L12 10 L7 12.5 L2 10Z" fill="#bdbdbd" stroke="#6a6a6a" stroke-width=".8"/><path d="M2 4 L7 6.5 L12 4 M7 6.5 V12.5" stroke="#6a6a6a" stroke-width=".7" fill="none"/><path d="M2 4 L7 1.5 L12 4 L7 6.5Z" fill="#ececec"/><path d="M8.5 9 L14 14.5 M14 9 L8.5 14.5" stroke="#555" stroke-width="2.2"/></g></svg>
<div class="a" style="left:58px;top:114px;width:1px;height:20px;background:#c8c8c8;border-right:1px solid #fff"></div>
<svg class="a" style="left:62px;top:115px" width="16" height="16" viewBox="0 0 16 16"><path d="M1 15 Q4 11 6 12 L14 3 L15 4 L7 13 Q5 13 1 15" fill="#fff" stroke="#999" stroke-width=".9"/></svg>
<svg class="a" style="left:85px;top:115px" width="16" height="16" viewBox="0 0 16 16"><text x="4" y="8" font-size="7" font-weight="bold" fill="#3050c0" text-anchor="middle">A</text><text x="4" y="15" font-size="7" font-weight="bold" fill="#c02020" text-anchor="middle">Z</text><path d="M11 1 V13 M8 10 L11 14 L14 10" stroke="#5a8ae0" stroke-width="2" fill="none"/></svg>
<div class="a" style="left:107px;top:114px;width:1px;height:20px;background:#c8c8c8;border-right:1px solid #fff"></div>
<div class="a" style="left:109px;top:114px;width:24px;height:20px;background:#dde8f4;border:1px solid #6aa4e0;border-radius:2px"></div>
<svg class="a" style="left:113px;top:116px" width="16" height="16" viewBox="0 0 16 16"><circle cx="4.5" cy="8.5" r="3" fill="none" stroke="#555" stroke-width="1"/><circle cx="11.5" cy="8.5" r="3" fill="none" stroke="#555" stroke-width="1"/><path d="M7.5 8 H8.5 M1 5 L1.5 7 M15 5 L14.5 7" stroke="#555" stroke-width="1"/></svg>
<div class="a" style="left:9px;top:134px;width:213px;height:323px;background:#fff;border:1px solid #a8a8a8"></div>
<div class="a" style="left:10px;top:135px;width:196px;height:14px;background:linear-gradient(#fff,#f4f4f6 50%,#ebedf0);border-bottom:1px solid #d5d5d5"></div>
<div class="a" style="left:118px;top:136px;width:1px;height:12px;background:#e2e2e2"></div>
<div class="a" style="left:204px;top:136px;width:1px;height:12px;background:#e2e2e2"></div>
<div class="a t" style="left:15px;top:138px;font-size:8.6px;">Object</div>
<div class="a t" style="left:124px;top:138px;font-size:8.6px;">Value</div>
<div class="a" style="left:205px;top:135px;width:16px;height:321px;background:linear-gradient(90deg,#e8e8e8,#f4f4f4)"></div>
<svg class="a" style="left:209px;top:153px" width="8" height="5" viewBox="0 0 8 5"><path d="M0 4.5 L4 0 L8 4.5Z" fill="#333"/></svg>
<div class="a" style="left:206px;top:165px;width:14px;height:174px;background:linear-gradient(90deg,#eaeaea,#dcdcdc 50%,#cfcfcf);border:1px solid #9a9a9a;border-radius:2px"></div>
<svg class="a" style="left:209px;top:248px" width="8" height="7" viewBox="0 0 8 7"><path d="M0 .5 H8 M0 3.5 H8 M0 6.5 H8" stroke="#666" stroke-width="1"/></svg>
<svg class="a" style="left:209px;top:444px" width="8" height="5" viewBox="0 0 8 5"><path d="M0 0 L4 4.5 L8 0Z" fill="#333"/></svg>
<svg class="a" style="left:21px;top:148px" width="16" height="16" viewBox="0 0 16 16"><path d="M3 5 L8 2.5 L13 5 L13 11 L8 13.5 L3 11Z" fill="#b0b0b0" stroke="#5a5a5a" stroke-width=".9"/><path d="M3 5 L8 7.5 L13 5 L8 2.5Z" fill="#e4e4e4" stroke="#5a5a5a" stroke-width=".6"/><path d="M8 7.5 V13.5" stroke="#5a5a5a" stroke-width=".6"/></svg>
<div class="a t" style="left:39px;top:152.0px;font-size:8.6px;letter-spacing:-0.2px">Dem_P23_24</div>
<div class="a t" style="left:124px;top:152.0px;font-size:8.6px;color:#a0283a;letter-spacing:-0.2px">False</div>
<div class="a" style="left:10px;top:163px;width:195px;height:1px;background:repeating-linear-gradient(90deg,#e8e8e8 0 1px,transparent 1px 2px)"></div>
<svg class="a" style="left:21px;top:162px" width="16" height="16" viewBox="0 0 16 16"><path d="M3 5 L8 2.5 L13 5 L13 11 L8 13.5 L3 11Z" fill="#b0b0b0" stroke="#5a5a5a" stroke-width=".9"/><path d="M3 5 L8 7.5 L13 5 L8 2.5Z" fill="#e4e4e4" stroke="#5a5a5a" stroke-width=".6"/><path d="M8 7.5 V13.5" stroke="#5a5a5a" stroke-width=".6"/></svg>
<div class="a t" style="left:39px;top:165.88px;font-size:8.6px;letter-spacing:-0.2px">Dem_V2_6</div>
<div class="a t" style="left:124px;top:165.88px;font-size:8.6px;color:#c02030;letter-spacing:-0.2px">True</div>
<div class="a" style="left:10px;top:177px;width:195px;height:1px;background:repeating-linear-gradient(90deg,#e8e8e8 0 1px,transparent 1px 2px)"></div>
<svg class="a" style="left:21px;top:176px" width="16" height="16" viewBox="0 0 16 16"><path d="M3 5 L8 2.5 L13 5 L13 11 L8 13.5 L3 11Z" fill="#b0b0b0" stroke="#5a5a5a" stroke-width=".9"/><path d="M3 5 L8 7.5 L13 5 L8 2.5Z" fill="#e4e4e4" stroke="#5a5a5a" stroke-width=".6"/><path d="M8 7.5 V13.5" stroke="#5a5a5a" stroke-width=".6"/></svg>
<div class="a t" style="left:39px;top:179.76px;font-size:8.6px;letter-spacing:-0.2px">Dem_V4</div>
<div class="a t" style="left:124px;top:179.76px;font-size:8.6px;color:#c02030;letter-spacing:-0.2px">True</div>
<div class="a" style="left:10px;top:191px;width:195px;height:1px;background:repeating-linear-gradient(90deg,#e8e8e8 0 1px,transparent 1px 2px)"></div>
<svg class="a" style="left:21px;top:190px" width="16" height="16" viewBox="0 0 16 16"><path d="M3 5 L8 2.5 L13 5 L13 11 L8 13.5 L3 11Z" fill="#b0b0b0" stroke="#5a5a5a" stroke-width=".9"/><path d="M3 5 L8 7.5 L13 5 L8 2.5Z" fill="#e4e4e4" stroke="#5a5a5a" stroke-width=".6"/><path d="M8 7.5 V13.5" stroke="#5a5a5a" stroke-width=".6"/></svg>
<div class="a t" style="left:39px;top:193.64px;font-size:8.6px;letter-spacing:-0.2px">Ext_V2</div>
<div class="a t" style="left:124px;top:193.64px;font-size:8.6px;color:#c02030;letter-spacing:-0.2px">True</div>
<div class="a" style="left:10px;top:205px;width:195px;height:1px;background:repeating-linear-gradient(90deg,#e8e8e8 0 1px,transparent 1px 2px)"></div>
<svg class="a" style="left:21px;top:204px" width="16" height="16" viewBox="0 0 16 16"><path d="M3 5 L8 2.5 L13 5 L13 11 L8 13.5 L3 11Z" fill="#b0b0b0" stroke="#5a5a5a" stroke-width=".9"/><path d="M3 5 L8 7.5 L13 5 L8 2.5Z" fill="#e4e4e4" stroke="#5a5a5a" stroke-width=".6"/><path d="M8 7.5 V13.5" stroke="#5a5a5a" stroke-width=".6"/></svg>
<div class="a t" style="left:39px;top:207.52px;font-size:8.6px;letter-spacing:-0.2px">Ext_V4</div>
<div class="a t" style="left:124px;top:207.52px;font-size:8.6px;color:#c02030;letter-spacing:-0.2px">True</div>
<div class="a" style="left:10px;top:219px;width:195px;height:1px;background:repeating-linear-gradient(90deg,#e8e8e8 0 1px,transparent 1px 2px)"></div>
<svg class="a" style="left:21px;top:218px" width="16" height="16" viewBox="0 0 16 16"><path d="M3 5 L8 2.5 L13 5 L13 11 L8 13.5 L3 11Z" fill="#b0b0b0" stroke="#5a5a5a" stroke-width=".9"/><path d="M3 5 L8 7.5 L13 5 L8 2.5Z" fill="#e4e4e4" stroke="#5a5a5a" stroke-width=".6"/><path d="M8 7.5 V13.5" stroke="#5a5a5a" stroke-width=".6"/></svg>
<div class="a t" style="left:39px;top:221.4px;font-size:8.6px;letter-spacing:-0.2px">Ext_V6</div>
<div class="a t" style="left:124px;top:221.4px;font-size:8.6px;color:#a0283a;letter-spacing:-0.2px">False</div>
<div class="a" style="left:10px;top:232px;width:195px;height:1px;background:repeating-linear-gradient(90deg,#e8e8e8 0 1px,transparent 1px 2px)"></div>
<svg class="a" style="left:11px;top:235px" width="9" height="9" viewBox="0 0 9 9"><rect x=".5" y=".5" width="8" height="8" fill="#fff" stroke="#9aa4b8" stroke-width="1"/><path d="M2 4.5 H7" stroke="#2a3a7a" stroke-width="1"/></svg>
<svg class="a" style="left:21px;top:231px" width="16" height="16" viewBox="0 0 16 16"><path d="M2 1 V15 M2 3 H14 M2 13 H14" stroke="#333" stroke-width="1.2"/><rect x="4" y="5" width="10" height="3" fill="#d03030"/><rect x="4" y="8" width="10" height="3" fill="#30b030"/></svg>
<div class="a t" style="left:39px;top:235.28px;font-size:8.6px;letter-spacing:-0.2px">Signal program</div>
<div class="a t" style="left:124px;top:235.28px;font-size:8.6px;color:#000;letter-spacing:-0.2px">STP 1</div>
<div class="a" style="left:10px;top:246px;width:195px;height:1px;background:repeating-linear-gradient(90deg,#e8e8e8 0 1px,transparent 1px 2px)"></div>
<svg class="a" style="left:30px;top:245px" width="16" height="16" viewBox="0 0 16 16"><path d="M3 5 L8 2.5 L13 5 L13 11 L8 13.5 L3 11Z" fill="#b0b0b0" stroke="#5a5a5a" stroke-width=".9"/><path d="M3 5 L8 7.5 L13 5 L8 2.5Z" fill="#e4e4e4" stroke="#5a5a5a" stroke-width=".6"/><path d="M8 7.5 V13.5" stroke="#5a5a5a" stroke-width=".6"/></svg>
<div class="a t" style="left:49px;top:249.16000000000003px;font-size:8.6px;letter-spacing:-0.2px">CT</div>
<div class="a t" style="left:124px;top:249.16000000000003px;font-size:8.6px;color:#000;letter-spacing:-0.2px">75</div>
<div class="a" style="left:10px;top:260px;width:195px;height:1px;background:repeating-linear-gradient(90deg,#e8e8e8 0 1px,transparent 1px 2px)"></div>
<svg class="a" style="left:30px;top:259px" width="16" height="16" viewBox="0 0 16 16"><path d="M3 5 L8 2.5 L13 5 L13 11 L8 13.5 L3 11Z" fill="#b0b0b0" stroke="#5a5a5a" stroke-width=".9"/><path d="M3 5 L8 7.5 L13 5 L8 2.5Z" fill="#e4e4e4" stroke="#5a5a5a" stroke-width=".6"/><path d="M8 7.5 V13.5" stroke="#5a5a5a" stroke-width=".6"/></svg>
<div class="a t" style="left:49px;top:263.04px;font-size:8.6px;letter-spacing:-0.2px">Tx</div>
<div class="a t" style="left:124px;top:263.04px;font-size:8.6px;color:#000;letter-spacing:-0.2px">17,0</div>
<div class="a" style="left:10px;top:274px;width:195px;height:1px;background:repeating-linear-gradient(90deg,#e8e8e8 0 1px,transparent 1px 2px)"></div>
<svg class="a" style="left:30px;top:273px" width="16" height="16" viewBox="0 0 16 16"><path d="M3 5 L8 2.5 L13 5 L13 11 L8 13.5 L3 11Z" fill="#b0b0b0" stroke="#5a5a5a" stroke-width=".9"/><path d="M3 5 L8 7.5 L13 5 L8 2.5Z" fill="#e4e4e4" stroke="#5a5a5a" stroke-width=".6"/><path d="M8 7.5 V13.5" stroke="#5a5a5a" stroke-width=".6"/></svg>
<div class="a t" style="left:49px;top:276.92px;font-size:8.6px;letter-spacing:-0.2px">Spl type</div>
<div class="a t" style="left:124px;top:276.92px;font-size:8.6px;color:#000;letter-spacing:-0.2px">Normal</div>
<div class="a" style="left:10px;top:288px;width:195px;height:1px;background:repeating-linear-gradient(90deg,#e8e8e8 0 1px,transparent 1px 2px)"></div>
<svg class="a" style="left:30px;top:287px" width="16" height="16" viewBox="0 0 16 16"><path d="M3 5 L8 2.5 L13 5 L13 11 L8 13.5 L3 11Z" fill="#b0b0b0" stroke="#5a5a5a" stroke-width=".9"/><path d="M3 5 L8 7.5 L13 5 L8 2.5Z" fill="#e4e4e4" stroke="#5a5a5a" stroke-width=".6"/><path d="M8 7.5 V13.5" stroke="#5a5a5a" stroke-width=".6"/></svg>
<div class="a t" style="left:49px;top:290.8px;font-size:8.6px;letter-spacing:-0.2px">Coord Tx</div>
<div class="a t" style="left:124px;top:290.8px;font-size:8.6px;color:#000;letter-spacing:-0.2px">17,0</div>
<div class="a" style="left:10px;top:302px;width:195px;height:1px;background:repeating-linear-gradient(90deg,#e8e8e8 0 1px,transparent 1px 2px)"></div>
<svg class="a" style="left:30px;top:301px" width="16" height="16" viewBox="0 0 16 16"><path d="M3 5 L8 2.5 L13 5 L13 11 L8 13.5 L3 11Z" fill="#b0b0b0" stroke="#5a5a5a" stroke-width=".9"/><path d="M3 5 L8 7.5 L13 5 L8 2.5Z" fill="#e4e4e4" stroke="#5a5a5a" stroke-width=".6"/><path d="M8 7.5 V13.5" stroke="#5a5a5a" stroke-width=".6"/></svg>
<div class="a t" style="left:49px;top:304.68px;font-size:8.6px;letter-spacing:-0.2px">Modif.</div>
<div class="a t" style="left:124px;top:304.68px;font-size:8.6px;color:#000;letter-spacing:-0.2px">&nbsp;TA</div>
<div class="a" style="left:10px;top:316px;width:195px;height:1px;background:repeating-linear-gradient(90deg,#e8e8e8 0 1px,transparent 1px 2px)"></div>
<svg class="a" style="left:30px;top:315px" width="16" height="16" viewBox="0 0 16 16"><path d="M3 5 L8 2.5 L13 5 L13 11 L8 13.5 L3 11Z" fill="#b0b0b0" stroke="#5a5a5a" stroke-width=".9"/><path d="M3 5 L8 7.5 L13 5 L8 2.5Z" fill="#e4e4e4" stroke="#5a5a5a" stroke-width=".6"/><path d="M8 7.5 V13.5" stroke="#5a5a5a" stroke-width=".6"/></svg>
<div class="a t" style="left:49px;top:318.56px;font-size:8.6px;letter-spacing:-0.2px">Spl desire</div>
<div class="a" style="left:10px;top:330px;width:195px;height:1px;background:repeating-linear-gradient(90deg,#e8e8e8 0 1px,transparent 1px 2px)"></div>
<svg class="a" style="left:30px;top:329px" width="16" height="16" viewBox="0 0 16 16"><path d="M3 5 L8 2.5 L13 5 L13 11 L8 13.5 L3 11Z" fill="#b0b0b0" stroke="#5a5a5a" stroke-width=".9"/><path d="M3 5 L8 7.5 L13 5 L8 2.5Z" fill="#e4e4e4" stroke="#5a5a5a" stroke-width=".6"/><path d="M8 7.5 V13.5" stroke="#5a5a5a" stroke-width=".6"/></svg>
<div class="a t" style="left:49px;top:332.44px;font-size:8.6px;letter-spacing:-0.2px">Modif. desire</div>
<div class="a t" style="left:124px;top:332.44px;font-size:8.6px;color:#000;letter-spacing:-0.2px">&nbsp;TA</div>
<div class="a" style="left:10px;top:344px;width:195px;height:1px;background:repeating-linear-gradient(90deg,#e8e8e8 0 1px,transparent 1px 2px)"></div>
<svg class="a" style="left:11px;top:346px" width="9" height="9" viewBox="0 0 9 9"><rect x=".5" y=".5" width="8" height="8" fill="#fff" stroke="#9aa4b8" stroke-width="1"/><path d="M2 4.5 H7" stroke="#2a3a7a" stroke-width="1"/><path d="M4.5 2 V7" stroke="#2a3a7a" stroke-width="1"/></svg>
<svg class="a" style="left:21px;top:343px" width="16" height="16" viewBox="0 0 16 16"><path d="M3 1 V15 M3 3 H13 M5 6 H12 M5 9 H14 M5 12 H11 M3 15 H14" stroke="#333" stroke-width="1"/></svg>
<div class="a t" style="left:39px;top:346.32px;font-size:8.6px;letter-spacing:-0.2px">Permission plan</div>
<div class="a t" style="left:124px;top:346.32px;font-size:8.6px;color:#000;letter-spacing:-0.2px">Permission Plan 1</div>
<div class="a" style="left:10px;top:357px;width:195px;height:1px;background:repeating-linear-gradient(90deg,#e8e8e8 0 1px,transparent 1px 2px)"></div>
<svg class="a" style="left:11px;top:360px" width="9" height="9" viewBox="0 0 9 9"><rect x=".5" y=".5" width="8" height="8" fill="#fff" stroke="#9aa4b8" stroke-width="1"/><path d="M2 4.5 H7" stroke="#2a3a7a" stroke-width="1"/><path d="M4.5 2 V7" stroke="#2a3a7a" stroke-width="1"/></svg>
<svg class="a" style="left:21px;top:356px" width="16" height="16" viewBox="0 0 16 16"><path d="M1 2 L3 4 V13 H13 V4 L15 2 M3 4 H13" stroke="#333" stroke-width="1" fill="none"/><rect x="5" y="7" width="6" height="4" fill="#aac0f8" stroke="#2040d0" stroke-width="1"/></svg>
<div class="a t" style="left:39px;top:360.2px;font-size:8.6px;letter-spacing:-0.2px">Detectors</div>
<div class="a t" style="left:124px;top:360.2px;font-size:8.6px;color:#000;letter-spacing:-0.2px">D2_1, D4_2</div>
<div class="a" style="left:10px;top:371px;width:195px;height:1px;background:repeating-linear-gradient(90deg,#e8e8e8 0 1px,transparent 1px 2px)"></div>
<svg class="a" style="left:11px;top:374px" width="9" height="9" viewBox="0 0 9 9"><rect x=".5" y=".5" width="8" height="8" fill="#fff" stroke="#9aa4b8" stroke-width="1"/><path d="M2 4.5 H7" stroke="#2a3a7a" stroke-width="1"/><path d="M4.5 2 V7" stroke="#2a3a7a" stroke-width="1"/></svg>
<svg class="a" style="left:21px;top:370px" width="16" height="16" viewBox="0 0 16 16"><circle cx="8" cy="4" r="2.5" fill="#fff" stroke="#444"/><circle cx="3.5" cy="12" r="2.5" fill="#fff" stroke="#444"/><circle cx="12.5" cy="12" r="2.5" fill="#fff" stroke="#444"/><path d="M6.5 6 L4.5 10 M9.5 6 L11.5 10 M6 12 H10" stroke="#444"/></svg>
<div class="a t" style="left:39px;top:374.08px;font-size:8.6px;letter-spacing:-0.2px">Stages</div>
<div class="a" style="left:10px;top:385px;width:195px;height:1px;background:repeating-linear-gradient(90deg,#e8e8e8 0 1px,transparent 1px 2px)"></div>
<svg class="a" style="left:11px;top:388px" width="9" height="9" viewBox="0 0 9 9"><rect x=".5" y=".5" width="8" height="8" fill="#fff" stroke="#9aa4b8" stroke-width="1"/><path d="M2 4.5 H7" stroke="#2a3a7a" stroke-width="1"/><path d="M4.5 2 V7" stroke="#2a3a7a" stroke-width="1"/></svg>
<svg class="a" style="left:21px;top:384px" width="16" height="16" viewBox="0 0 16 16"><path d="M2 1 V15 M2 4 H14 M2 12 H14" stroke="#333" stroke-width="1"/><rect x="4" y="6" width="5" height="2" fill="#30b030"/><rect x="7" y="9" width="6" height="2" fill="#d03030"/></svg>
<div class="a t" style="left:39px;top:387.96px;font-size:8.6px;letter-spacing:-0.2px">Stage transitions</div>
<div class="a t" style="left:124px;top:387.96px;font-size:8.6px;color:#000;letter-spacing:-0.2px"><b>ST 5.1: 3,0</b></div>
<div class="a" style="left:10px;top:399px;width:195px;height:1px;background:repeating-linear-gradient(90deg,#e8e8e8 0 1px,transparent 1px 2px)"></div>
<svg class="a" style="left:11px;top:402px" width="9" height="9" viewBox="0 0 9 9"><rect x=".5" y=".5" width="8" height="8" fill="#fff" stroke="#9aa4b8" stroke-width="1"/><path d="M2 4.5 H7" stroke="#2a3a7a" stroke-width="1"/></svg>
<svg class="a" style="left:21px;top:398px" width="16" height="16" viewBox="0 0 16 16"><rect x="2" y="2" width="5" height="12" rx="1.8" fill="#333"/><rect x="9" y="2" width="5" height="12" rx="1.8" fill="#333"/><circle cx="4.5" cy="5" r="1.6" fill="#f22"/><circle cx="4.5" cy="8" r="1.6" fill="#ee0"/><circle cx="4.5" cy="11" r="1.6" fill="#1c1"/><circle cx="11.5" cy="5" r="1.6" fill="#f22"/><circle cx="11.5" cy="8" r="1.6" fill="#ee0"/><circle cx="11.5" cy="11" r="1.6" fill="#1c1"/></svg>
<div class="a t" style="left:39px;top:401.84px;font-size:8.6px;letter-spacing:-0.2px">Signal groups</div>
<div class="a" style="left:10px;top:413px;width:195px;height:1px;background:repeating-linear-gradient(90deg,#e8e8e8 0 1px,transparent 1px 2px)"></div>
<svg class="a" style="left:20px;top:415px" width="9" height="9" viewBox="0 0 9 9"><rect x=".5" y=".5" width="8" height="8" fill="#fff" stroke="#9aa4b8" stroke-width="1"/><path d="M2 4.5 H7" stroke="#2a3a7a" stroke-width="1"/><path d="M4.5 2 V7" stroke="#2a3a7a" stroke-width="1"/></svg>
<svg class="a" style="left:30px;top:412px" width="16" height="16" viewBox="0 0 16 16"><rect x="2" y="2" width="5" height="12" rx="1.8" fill="#333"/><rect x="9" y="2" width="5" height="12" rx="1.8" fill="#333"/><circle cx="4.5" cy="5" r="1.6" fill="#f22"/><circle cx="4.5" cy="8" r="1.6" fill="#ee0"/><circle cx="4.5" cy="11" r="1.6" fill="#1c1"/><circle cx="11.5" cy="5" r="1.6" fill="#f22"/><circle cx="11.5" cy="8" r="1.6" fill="#ee0"/><circle cx="11.5" cy="11" r="1.6" fill="#1c1"/></svg>
<div class="a t" style="left:49px;top:415.72px;font-size:8.6px;letter-spacing:-0.2px">V1</div>
<div class="a t" style="left:124px;top:415.72px;font-size:8.6px;color:#ff2020;letter-spacing:-0.2px">RT 40,0</div>
<div class="a" style="left:10px;top:427px;width:195px;height:1px;background:repeating-linear-gradient(90deg,#e8e8e8 0 1px,transparent 1px 2px)"></div>
<svg class="a" style="left:20px;top:429px" width="9" height="9" viewBox="0 0 9 9"><rect x=".5" y=".5" width="8" height="8" fill="#fff" stroke="#9aa4b8" stroke-width="1"/><path d="M2 4.5 H7" stroke="#2a3a7a" stroke-width="1"/><path d="M4.5 2 V7" stroke="#2a3a7a" stroke-width="1"/></svg>
<svg class="a" style="left:30px;top:426px" width="16" height="16" viewBox="0 0 16 16"><rect x="2" y="2" width="5" height="12" rx="1.8" fill="#333"/><rect x="9" y="2" width="5" height="12" rx="1.8" fill="#333"/><circle cx="4.5" cy="5" r="1.6" fill="#f22"/><circle cx="4.5" cy="8" r="1.6" fill="#ee0"/><circle cx="4.5" cy="11" r="1.6" fill="#1c1"/><circle cx="11.5" cy="5" r="1.6" fill="#f22"/><circle cx="11.5" cy="8" r="1.6" fill="#ee0"/><circle cx="11.5" cy="11" r="1.6" fill="#1c1"/></svg>
<div class="a t" style="left:49px;top:429.6px;font-size:8.6px;letter-spacing:-0.2px">V2</div>
<div class="a t" style="left:124px;top:429.6px;font-size:8.6px;color:#ff2020;letter-spacing:-0.2px">RT 18,0</div>
<div class="a" style="left:10px;top:441px;width:195px;height:1px;background:repeating-linear-gradient(90deg,#e8e8e8 0 1px,transparent 1px 2px)"></div>
<svg class="a" style="left:20px;top:443px" width="9" height="9" viewBox="0 0 9 9"><rect x=".5" y=".5" width="8" height="8" fill="#fff" stroke="#9aa4b8" stroke-width="1"/><path d="M2 4.5 H7" stroke="#2a3a7a" stroke-width="1"/><path d="M4.5 2 V7" stroke="#2a3a7a" stroke-width="1"/></svg>
<svg class="a" style="left:30px;top:440px" width="16" height="16" viewBox="0 0 16 16"><rect x="2" y="2" width="5" height="12" rx="1.8" fill="#333"/><rect x="9" y="2" width="5" height="12" rx="1.8" fill="#333"/><circle cx="4.5" cy="5" r="1.6" fill="#f22"/><circle cx="4.5" cy="8" r="1.6" fill="#ee0"/><circle cx="4.5" cy="11" r="1.6" fill="#1c1"/><circle cx="11.5" cy="5" r="1.6" fill="#f22"/><circle cx="11.5" cy="8" r="1.6" fill="#ee0"/><circle cx="11.5" cy="11" r="1.6" fill="#1c1"/></svg>
<div class="a t" style="left:49px;top:443.48px;font-size:8.6px;letter-spacing:-0.2px">V3</div>
<div class="a t" style="left:124px;top:443.48px;font-size:8.6px;color:#1a8a1a;letter-spacing:-0.2px">GT 14,0</div>
<div class="a" style="left:7px;top:457px;width:216px;height:165px;background:#f0f0f0"></div>
<div class="a" style="left:9px;top:461px;width:213px;height:13px;background:linear-gradient(#f6f6f6,#e8e8e8);border:1px solid #c0c0c0;border-radius:2px"></div>
<div class="a t" style="left:12px;top:463.5px;font-size:8.6px;">Control panel</div>
<svg class="a" style="left:211px;top:463px" width="9" height="9" viewBox="0 0 9 9"><path d="M1 1 L8 8 M8 1 L1 8" stroke="#333" stroke-width="1.1"/></svg>
<div class="a" style="left:9px;top:476px;width:213px;height:146px;border-left:1px solid #ddd;border-right:1px solid #ddd"></div>
<div class="a" style="left:13px;top:480px;width:206px;height:16px;background:linear-gradient(#f2f2f2,#e6e6e6 50%,#d9d9d9 51%,#dedede);border:1px solid #8e8f8f;border-radius:3px"></div><div class="a t" style="left:16px;top:484px;font-size:8.6px;">STP 1</div><svg class="a" style="left:204px;top:486px" width="9" height="5" viewBox="0 0 9 5"><path d="M0 0 H9 L4.5 5Z" fill="#000"/></svg>
<div class="a" style="left:13px;top:501px;width:206px;height:16px;background:linear-gradient(#f2f2f2,#e6e6e6 50%,#d9d9d9 51%,#dedede);border:1px solid #8e8f8f;border-radius:3px"></div><div class="a t" style="left:16px;top:505px;font-size:8.6px;">Uncoordinated</div><svg class="a" style="left:204px;top:507px" width="9" height="5" viewBox="0 0 9 5"><path d="M0 0 H9 L4.5 5Z" fill="#000"/></svg>
<div class="a" style="left:13px;top:521px;width:206px;height:39px;background:#fff;border:1px solid #a0a0a0;border-radius:1px"></div>
<div class="a" style="left:29px;top:523px;width:188px;height:10px;background:#3399ff"></div>
<div class="a" style="left:17px;top:523px;width:11px;height:10px;background:#fff;border:1px solid #ddd"></div>
<div class="a t" style="left:31px;top:524.5px;font-size:8.6px;color:#fff">TA</div>
<div class="a" style="left:17px;top:533px;width:11px;height:10px;background:#fff;border:1px solid #bbb"></div>
<div class="a t" style="left:31px;top:534.5px;font-size:8.6px;">PT</div>
<div class="a" style="left:17px;top:543px;width:11px;height:10px;background:#fff;border:1px solid #bbb"></div>
<div class="a t" style="left:31px;top:544.5px;font-size:8.6px;">Priv. tr.</div>
<svg class="a" style="left:19px;top:525px" width="8" height="7" viewBox="0 0 8 7"><path d="M.5 3.5 L3 6 L7.5 .5" stroke="#000" stroke-width="1.6" fill="none"/></svg>
<div class="a" style="left:13px;top:567px;width:206px;height:26px;border:1px solid #cfcfcf;border-radius:2px"></div>
<div class="a" style="left:19px;top:562px;width:34px;height:10px;background:#f0f0f0"></div>
<svg class="a" style="left:21px;top:563px" width="8" height="8" viewBox="0 0 8 8"><rect x=".5" y=".5" width="7" height="7" fill="#fff" stroke="#333"/><path d="M2 4 H6" stroke="#000"/></svg>
<div class="a t" style="left:30px;top:561.5px;font-size:8.6px;">Time</div>
<div class="a" style="left:20px;top:572px;width:192px;height:16px;background:#fff;border:1px solid #c4c4c4"></div>
<div class="a t" style="left:23px;top:576px;font-size:8.6px;">Wed 05.01.2011 11:56:32</div>
<svg class="a" style="left:196px;top:574px" width="11" height="11" viewBox="0 0 11 11"><circle cx="5.5" cy="5.5" r="4.6" fill="#fff" stroke="#333" stroke-width="1"/><path d="M5.5 2 V5.5 H9" stroke="#333" stroke-width="1" fill="none"/></svg>
<div class="a" style="left:15px;top:598px;width:26px;height:16px;background:#f0f0f0;border:1px solid #3a3a3a;box-shadow:inset 0 0 0 1px #fff"></div>
<div class="a t" style="left:22px;top:602.5px;font-size:8.6px;">PB</div>
<div class="a" style="left:180px;top:597px;width:37px;height:17px;background:#f0f0f0;border:1px solid #3a3a3a;box-shadow:inset 0 0 0 1px #fff"></div>
<div class="a t" style="left:187px;top:602px;font-size:8.6px;">Apply</div>
<div class="a" style="left:226px;top:99px;width:738px;height:317px;background:#f0f0f0;border:1px solid #888;border-right-color:#ddd;border-bottom-color:#ddd"></div>
<div class="a" style="left:226px;top:99px;width:738px;height:2px;background:#8a8a8a"></div>
<div class="a" style="left:226px;top:99px;width:2px;height:317px;background:#8a8a8a"></div>
<div class="a" style="left:227px;top:101px;width:720px;height:298px;overflow:hidden"><svg class="a" style="left:-227px;top:-101px" width="972" height="644" viewBox="0 0 972 644"><rect x="227" y="101" width="720" height="298" fill="#fafad9"/><path d="M200 240.8 L278 237.8 C300 234 318 222 345 219.8 L546 216.5 C556 211 573 197 580 180 L599.5 90 L670.5 90 L659 175 C661 205 685 226 720 228.2 L970 228.6 L970 315.2 L730 315.6 C700 322 676 350 672 410 L604 410 C600 370 585 333 545 316.6 L200 320.2 Z" fill="none" stroke="#f5dcdc" stroke-width="27" stroke-linejoin="round"/><path d="M200 240.8 L278 237.8 C300 234 318 222 345 219.8 L546 216.5 C556 211 573 197 580 180 L599.5 90 L670.5 90 L659 175 C661 205 685 226 720 228.2 L970 228.6 L970 315.2 L730 315.6 C700 322 676 350 672 410 L604 410 C600 370 585 333 545 316.6 L200 320.2 Z" fill="#dcdcdc" stroke="#2a2a2a" stroke-width="1.1"/><path d="M227 253.8 L480 247 L720 245.5 L947 245.3" fill="none" stroke="#333" stroke-width="1.2" stroke-dasharray="10 14"/><path d="M227 291.4 L427 289.3" fill="none" stroke="#222" stroke-width="1.7" stroke-dasharray="10 14"/><path d="M227 307.4 L427 304.2" fill="none" stroke="#333" stroke-width="1.2" stroke-dasharray="10 14"/><path d="M525 230 L720 229.5" fill="none" stroke="#222" stroke-width="1.7" stroke-dasharray="10 14"/><path d="M525 261 L712 261.5" fill="none" stroke="#333" stroke-width="1.2" stroke-dasharray="10 14"/><path d="M525 287 L720 287" fill="none" stroke="#333" stroke-width="1.2" stroke-dasharray="10 14"/><path d="M525 301.7 L947 300.4" fill="none" stroke="#333" stroke-width="1.2" stroke-dasharray="10 14"/><path d="M527 316.4 L715 316" fill="none" stroke="#222" stroke-width="1.7" stroke-dasharray="10 14"/><path d="M540 230 L720 230" stroke="#dcdcdc" stroke-width="0"/><path d="M427 289.3 L486 288.6 M427 304.2 L486 303.6" stroke="#222" stroke-width="1.2"/><path d="M290 236.3 L480 231 C510 229.5 532 224 547 216.5" fill="none" stroke="#222" stroke-width="1.1"/><path d="M566 229 C580 220 591 202 594.5 186" fill="none" stroke="#222" stroke-width="1.1"/><path d="M606 100 L589 152 M612 100 L603 153 M657 100 L653.5 140 L658.5 178" fill="none" stroke="#222" stroke-width="1.2"/><path d="M602 104 L599 114 L600.5 116 L597 122" fill="none" stroke="#111" stroke-width="1.8"/><path d="M624 100 L637.5 100 L629 150 L617 150 Z M612.5 192 L621.5 193 L611 218 Z" fill="#fff"/><clipPath id="hn"><path d="M624 100 L637.5 100 L629 150 L617 150 Z M612.5 192 L621.5 193 L611 218 Z"/></clipPath><g clip-path="url(#hn)"><path d="M360 240 L600 60" stroke="#222" stroke-width="2"/><path d="M366 240 L606 60" stroke="#222" stroke-width="2"/><path d="M372 240 L612 60" stroke="#222" stroke-width="2"/><path d="M378 240 L618 60" stroke="#222" stroke-width="2"/><path d="M384 240 L624 60" stroke="#222" stroke-width="2"/><path d="M390 240 L630 60" stroke="#222" stroke-width="2"/><path d="M396 240 L636 60" stroke="#222" stroke-width="2"/><path d="M402 240 L642 60" stroke="#222" stroke-width="2"/><path d="M408 240 L648 60" stroke="#222" stroke-width="2"/><path d="M414 240 L654 60" stroke="#222" stroke-width="2"/><path d="M420 240 L660 60" stroke="#222" stroke-width="2"/><path d="M426 240 L666 60" stroke="#222" stroke-width="2"/><path d="M432 240 L672 60" stroke="#222" stroke-width="2"/><path d="M438 240 L678 60" stroke="#222" stroke-width="2"/><path d="M444 240 L684 60" stroke="#222" stroke-width="2"/><path d="M450 240 L690 60" stroke="#222" stroke-width="2"/><path d="M456 240 L696 60" stroke="#222" stroke-width="2"/><path d="M462 240 L702 60" stroke="#222" stroke-width="2"/><path d="M468 240 L708 60" stroke="#222" stroke-width="2"/><path d="M474 240 L714 60" stroke="#222" stroke-width="2"/><path d="M480 240 L720 60" stroke="#222" stroke-width="2"/><path d="M486 240 L726 60" stroke="#222" stroke-width="2"/><path d="M492 240 L732 60" stroke="#222" stroke-width="2"/><path d="M498 240 L738 60" stroke="#222" stroke-width="2"/><path d="M504 240 L744 60" stroke="#222" stroke-width="2"/><path d="M510 240 L750 60" stroke="#222" stroke-width="2"/><path d="M516 240 L756 60" stroke="#222" stroke-width="2"/><path d="M522 240 L762 60" stroke="#222" stroke-width="2"/><path d="M528 240 L768 60" stroke="#222" stroke-width="2"/><path d="M534 240 L774 60" stroke="#222" stroke-width="2"/><path d="M540 240 L780 60" stroke="#222" stroke-width="2"/><path d="M546 240 L786 60" stroke="#222" stroke-width="2"/><path d="M552 240 L792 60" stroke="#222" stroke-width="2"/><path d="M558 240 L798 60" stroke="#222" stroke-width="2"/><path d="M564 240 L804 60" stroke="#222" stroke-width="2"/><path d="M570 240 L810 60" stroke="#222" stroke-width="2"/><path d="M576 240 L816 60" stroke="#222" stroke-width="2"/><path d="M582 240 L822 60" stroke="#222" stroke-width="2"/><path d="M588 240 L828 60" stroke="#222" stroke-width="2"/><path d="M594 240 L834 60" stroke="#222" stroke-width="2"/></g><path d="M624 100 L637.5 100 L629 150 L617 150 Z M612.5 192 L621.5 193 L611 218 Z" fill="none" stroke="#333" stroke-width=".8"/><ellipse cx="619.5" cy="170.5" rx="8" ry="26" transform="rotate(12 619.5 170.5)" fill="#7abf55" stroke="#333" stroke-width="1"/><path d="M585 160.5 L661 172 M579 180.6 L665 193.8" fill="none" stroke="#333" stroke-width="1.1" stroke-dasharray="2.5 1.5"/><path d="M588 152.5 L617.6 156.2" stroke="#111" stroke-width="2"/><path d="M494 217 V318 M515.5 217 V318" fill="none" stroke="#333" stroke-width="1.1" stroke-dasharray="2.5 1.5"/><path d="M486 256 V318" stroke="#111" stroke-width="2"/><path d="M200 268.2 L480 263 L510 262.6 L528 267 L510 272 L480 272 L200 275.5 Z" fill="#7abf55" stroke="#2a2a2a" stroke-width="1.1"/><path d="M960 262 L724 262 C712 262 712 284 724 284 L960 284 Z" fill="#7abf55" stroke="#2a2a2a" stroke-width="1.1"/><clipPath id="he"><path d="M692 273 C700 266 710 262.5 720 262 L720 284 C710 283.5 700 280 692 273Z"/></clipPath><g clip-path="url(#he)"><path d="M682 290 L702 255" stroke="#333" stroke-width="1.4"/><path d="M686 290 L706 255" stroke="#333" stroke-width="1.4"/><path d="M690 290 L710 255" stroke="#333" stroke-width="1.4"/><path d="M694 290 L714 255" stroke="#333" stroke-width="1.4"/><path d="M698 290 L718 255" stroke="#333" stroke-width="1.4"/><path d="M702 290 L722 255" stroke="#333" stroke-width="1.4"/><path d="M706 290 L726 255" stroke="#333" stroke-width="1.4"/><path d="M710 290 L730 255" stroke="#333" stroke-width="1.4"/><path d="M714 290 L734 255" stroke="#333" stroke-width="1.4"/><path d="M718 290 L738 255" stroke="#333" stroke-width="1.4"/></g><path d="M692 273 C700 266 710 262.5 720 262 M692 273 C700 280 710 283.5 720 284" fill="none" stroke="#333" stroke-width="1"/><path d="M736 228 V262" stroke="#111" stroke-width="2"/><path d="M613 316 L620 330 L632 380 L633 400 L624 400 L612 332 Z" fill="#fff" stroke="#333" stroke-width="1"/><clipPath id="hs"><path d="M613 316 L620 330 L632 380 L633 400 L624 400 L612 332 Z"/></clipPath><g clip-path="url(#hs)"><path d="M550 420 L610 300" stroke="#333" stroke-width="1.8"/><path d="M555 420 L615 300" stroke="#333" stroke-width="1.8"/><path d="M560 420 L620 300" stroke="#333" stroke-width="1.8"/><path d="M565 420 L625 300" stroke="#333" stroke-width="1.8"/><path d="M570 420 L630 300" stroke="#333" stroke-width="1.8"/><path d="M575 420 L635 300" stroke="#333" stroke-width="1.8"/><path d="M580 420 L640 300" stroke="#333" stroke-width="1.8"/><path d="M585 420 L645 300" stroke="#333" stroke-width="1.8"/><path d="M590 420 L650 300" stroke="#333" stroke-width="1.8"/><path d="M595 420 L655 300" stroke="#333" stroke-width="1.8"/><path d="M600 420 L660 300" stroke="#333" stroke-width="1.8"/><path d="M605 420 L665 300" stroke="#333" stroke-width="1.8"/><path d="M610 420 L670 300" stroke="#333" stroke-width="1.8"/><path d="M615 420 L675 300" stroke="#333" stroke-width="1.8"/><path d="M620 420 L680 300" stroke="#333" stroke-width="1.8"/><path d="M625 420 L685 300" stroke="#333" stroke-width="1.8"/></g><ellipse cx="622" cy="356" rx="8" ry="25" transform="rotate(-14 622 356)" fill="#7abf55" stroke="#333" stroke-width="1"/><path d="M585 345 L682 345 M585 361.7 L682 361.7" fill="none" stroke="#333" stroke-width="1.1" stroke-dasharray="2.5 1.5"/><path d="M630 368 L680 368" stroke="#111" stroke-width="2"/><path d="M631 368 L634 400 M650 368 L651 400" stroke="#333" stroke-width="1"/><path d="M757 100 V170.7 H842" fill="none" stroke="#222" stroke-width="1.1"/></svg></div>
<div class="a t" style="left:765.5px;top:153.5px;font-size:13px;color:#111">20x20</div>
<div class="a" style="left:227px;top:101px;width:720px;height:298px;overflow:hidden"><svg class="a" style="left:-227px;top:-101px" width="972" height="644" viewBox="0 0 972 644"><rect x="478" y="254" width="10.5" height="22.9" rx="1.2" fill="#060606"/><path d="M479.25 259.15 L481.45 256.75 H485.05 L487.25 259.15 L485.05 261.54999999999995 H481.45Z" fill="#ff1010"/><path d="M479.25 265.45 L481.45 263.05 H485.05 L487.25 265.45 L485.05 267.84999999999997 H481.45Z" fill="#9a9a9a"/><path d="M479.25 271.75 L481.45 269.35 H485.05 L487.25 271.75 L485.05 274.15 H481.45Z" fill="#9a9a9a"/><path d="M480.5 276.9 V278.4 H486.0 V276.9Z" fill="#060606"/><rect x="500" y="259" width="10.5" height="16.6" rx="1.2" fill="#060606"/><path d="M501.25 264.15 L503.45 261.75 H507.05 L509.25 264.15 L507.05 266.54999999999995 H503.45Z" fill="#ff1010"/><path d="M501.25 270.45 L503.45 268.05 H507.05 L509.25 270.45 L507.05 272.84999999999997 H503.45Z" fill="#9a9a9a"/><path d="M502.5 275.6 V277.1 H508.0 V275.6Z" fill="#060606"/><rect x="480" y="317" width="10.5" height="22.9" rx="1.2" fill="#060606"/><path d="M481.25 322.15 L483.45 319.75 H487.05 L489.25 322.15 L487.05 324.54999999999995 H483.45Z" fill="#9a9a9a"/><path d="M481.25 328.45 L483.45 326.05 H487.05 L489.25 328.45 L487.05 330.84999999999997 H483.45Z" fill="#9a9a9a"/><path d="M481.25 334.75 L483.45 332.35 H487.05 L489.25 334.75 L487.05 337.15 H483.45Z" fill="#10e010"/><path d="M482.5 339.9 V341.4 H488.0 V339.9Z" fill="#060606"/><rect x="502" y="200" width="10.5" height="16.6" rx="1.2" fill="#060606"/><path d="M503.25 205.15 L505.45 202.75 H509.05 L511.25 205.15 L509.05 207.55 H505.45Z" fill="#ff1010"/><path d="M503.25 211.45000000000002 L505.45 209.05 H509.05 L511.25 211.45000000000002 L509.05 213.85000000000002 H505.45Z" fill="#9a9a9a"/><path d="M504.5 216.6 V218.1 H510.0 V216.6Z" fill="#060606"/><rect x="562.5" y="160.5" width="10.5" height="16.6" rx="1.2" fill="#060606"/><path d="M563.75 165.65 L565.95 163.25 H569.55 L571.75 165.65 L569.55 168.05 H565.95Z" fill="#9a9a9a"/><path d="M563.75 171.95000000000002 L565.95 169.55 H569.55 L571.75 171.95000000000002 L569.55 174.35000000000002 H565.95Z" fill="#10e010"/><path d="M565.0 177.1 V178.6 H570.5 V177.1Z" fill="#060606"/><rect x="573" y="151" width="10.5" height="22.9" rx="1.2" fill="#060606"/><path d="M574.25 156.15 L576.45 153.75 H580.05 L582.25 156.15 L580.05 158.55 H576.45Z" fill="#ff1010"/><path d="M574.25 162.45000000000002 L576.45 160.05 H580.05 L582.25 162.45000000000002 L580.05 164.85000000000002 H576.45Z" fill="#9a9a9a"/><path d="M574.25 168.75 L576.45 166.35 H580.05 L582.25 168.75 L580.05 171.15 H576.45Z" fill="#9a9a9a"/><path d="M575.5 173.9 V175.4 H581.0 V173.9Z" fill="#060606"/><rect x="614" y="168" width="10.5" height="16.6" rx="1.2" fill="#060606"/><path d="M615.25 173.15 L617.45 170.75 H621.05 L623.25 173.15 L621.05 175.55 H617.45Z" fill="#ff1010"/><path d="M615.25 179.45000000000002 L617.45 177.05 H621.05 L623.25 179.45000000000002 L621.05 181.85000000000002 H617.45Z" fill="#9a9a9a"/><path d="M616.5 184.6 V186.1 H622.0 V184.6Z" fill="#060606"/><rect x="663.5" y="177" width="10.5" height="16.6" rx="1.2" fill="#060606"/><path d="M664.75 182.15 L666.95 179.75 H670.55 L672.75 182.15 L670.55 184.55 H666.95Z" fill="#ff1010"/><path d="M664.75 188.45000000000002 L666.95 186.05 H670.55 L672.75 188.45000000000002 L670.55 190.85000000000002 H666.95Z" fill="#9a9a9a"/><path d="M666.0 193.6 V195.1 H671.5 V193.6Z" fill="#060606"/><rect x="731" y="205" width="10.5" height="22.9" rx="1.2" fill="#060606"/><path d="M732.25 210.15 L734.45 207.75 H738.05 L740.25 210.15 L738.05 212.55 H734.45Z" fill="#ff1010"/><path d="M732.25 216.45000000000002 L734.45 214.05 H738.05 L740.25 216.45000000000002 L738.05 218.85000000000002 H734.45Z" fill="#9a9a9a"/><path d="M732.25 222.75 L734.45 220.35 H738.05 L740.25 222.75 L738.05 225.15 H734.45Z" fill="#9a9a9a"/><path d="M733.5 227.9 V229.4 H739.0 V227.9Z" fill="#060606"/><rect x="580" y="349.5" width="10.5" height="16.6" rx="1.2" fill="#060606"/><path d="M581.25 354.65 L583.45 352.25 H587.05 L589.25 354.65 L587.05 357.04999999999995 H583.45Z" fill="#9a9a9a"/><path d="M581.25 360.95 L583.45 358.55 H587.05 L589.25 360.95 L587.05 363.34999999999997 H583.45Z" fill="#10e010"/><path d="M582.5 366.1 V367.6 H588.0 V366.1Z" fill="#060606"/><rect x="617.5" y="347.5" width="10.5" height="16.6" rx="1.2" fill="#060606"/><path d="M618.75 352.65 L620.95 350.25 H624.55 L626.75 352.65 L624.55 355.04999999999995 H620.95Z" fill="#9a9a9a"/><path d="M618.75 358.95 L620.95 356.55 H624.55 L626.75 358.95 L624.55 361.34999999999997 H620.95Z" fill="#10e010"/><path d="M620.0 364.1 V365.6 H625.5 V364.1Z" fill="#060606"/><rect x="673.5" y="367.5" width="10.5" height="22.9" rx="1.2" fill="#060606"/><path d="M674.75 372.65 L676.95 370.25 H680.55 L682.75 372.65 L680.55 375.04999999999995 H676.95Z" fill="#ff1010"/><path d="M674.75 378.95 L676.95 376.55 H680.55 L682.75 378.95 L680.55 381.34999999999997 H676.95Z" fill="#9a9a9a"/><path d="M674.75 385.25 L676.95 382.85 H680.55 L682.75 385.25 L680.55 387.65 H676.95Z" fill="#9a9a9a"/><path d="M676.0 390.4 V391.9 H681.5 V390.4Z" fill="#060606"/><rect x="520" y="263" width="10" height="9" rx="3" fill="#1e1e1e"/><ellipse cx="525" cy="267.5" rx="3" ry="2.5" fill="#8a8a8a"/><path d="M499 267 L491 264 L491 270Z M489 312 L497 309 L497 315Z M745 230 L738 232 L745 235Z M744 260 L737 258 L744 255Z" fill="#111"/><path d="M646 357 C 650 352, 655 352, 656 357 C 655 362 650 362 646 357Z M495 305 C499 300 503 301 503 306 C501 310 496 309 495 305Z M601 165 C596 161 596 156 602 156 C606 158 606 163 601 165Z" fill="#fff" stroke="#222" stroke-width=".8"/><rect x="520" y="203" width="10.5" height="8" fill="none" stroke="#f0e060" stroke-width="2"/><rect x="520" y="203" width="10.5" height="8" fill="#ececec" fill-opacity=".35" stroke="#1a1aff" stroke-width="1.1"/><rect x="534" y="264.5" width="10.5" height="8" fill="none" stroke="#f0e060" stroke-width="2"/><rect x="534" y="264.5" width="10.5" height="8" fill="#ececec" fill-opacity=".35" stroke="#1a1aff" stroke-width="1.1"/><rect x="501" y="334" width="10.5" height="8" fill="none" stroke="#f0e060" stroke-width="2"/><rect x="501" y="334" width="10.5" height="8" fill="#ececec" fill-opacity=".35" stroke="#1a1aff" stroke-width="1.1"/><rect x="591" y="136" width="10.5" height="8" fill="none" stroke="#f0e060" stroke-width="2"/><rect x="591" y="136" width="10.5" height="8" fill="#ececec" fill-opacity=".35" stroke="#1a1aff" stroke-width="1.1"/><rect x="606.5" y="142.6" width="10.5" height="8" fill="none" stroke="#f0e060" stroke-width="2"/><rect x="606.5" y="142.6" width="10.5" height="8" fill="#ececec" fill-opacity=".35" stroke="#1a1aff" stroke-width="1.1"/><rect x="372" y="279" width="10.5" height="8" fill="none" stroke="#f0e060" stroke-width="2"/><rect x="372" y="279" width="10.5" height="8" fill="#ececec" fill-opacity=".35" stroke="#1a1aff" stroke-width="1.1"/><rect x="470.5" y="277.5" width="10.5" height="8" fill="none" stroke="#f0e060" stroke-width="2"/><rect x="470.5" y="277.5" width="10.5" height="8" fill="#ececec" fill-opacity=".35" stroke="#1a1aff" stroke-width="1.1"/><rect x="637" y="381" width="10.5" height="8" fill="none" stroke="#f0e060" stroke-width="2"/><rect x="637" y="381" width="10.5" height="8" fill="#ececec" fill-opacity=".35" stroke="#1a1aff" stroke-width="1.1"/><g transform="translate(238.5 283.7) rotate(0)"><rect x="-11.0" y="-5.75" width="22" height="11.5" rx="0.8" fill="#20a0a0"/><rect x="-12.2" y="-2" width="1.5" height="4" fill="#20a0a0"/><rect x="-6.1" y="-4.25" width="2.1" height="8.5" fill="#ffffff" opacity=".92"/><rect x="1.5" y="-4.25" width="2.1" height="8.5" fill="#ffffff" opacity=".92"/><path d="M4.0 -5.15 H8.0 Q10.2 -4.75 10.2 0.0 Q10.2 4.75 8.0 5.15 H4.0" fill="none" stroke="#ffffff" stroke-width=".8" opacity=".85"/></g><g transform="translate(299 283.7) rotate(0)"><rect x="-11.0" y="-5.75" width="22" height="11.5" rx="0.8" fill="#20a0a0"/><rect x="-12.2" y="-2" width="1.5" height="4" fill="#20a0a0"/><rect x="-6.1" y="-4.25" width="2.1" height="8.5" fill="#ffffff" opacity=".92"/><rect x="1.5" y="-4.25" width="2.1" height="8.5" fill="#ffffff" opacity=".92"/><path d="M4.0 -5.15 H8.0 Q10.2 -4.75 10.2 0.0 Q10.2 4.75 8.0 5.15 H4.0" fill="none" stroke="#ffffff" stroke-width=".8" opacity=".85"/></g><g transform="translate(344 283.7) rotate(0)"><rect x="-11.0" y="-5.75" width="22" height="11.5" rx="0.8" fill="#20a0a0"/><rect x="-12.2" y="-2" width="1.5" height="4" fill="#20a0a0"/><rect x="-6.1" y="-4.25" width="2.1" height="8.5" fill="#ffffff" opacity=".92"/><rect x="1.5" y="-4.25" width="2.1" height="8.5" fill="#ffffff" opacity=".92"/><path d="M4.0 -5.15 H8.0 Q10.2 -4.75 10.2 0.0 Q10.2 4.75 8.0 5.15 H4.0" fill="none" stroke="#ffffff" stroke-width=".8" opacity=".85"/></g><g transform="translate(395.5 283.7) rotate(0)"><rect x="-11.0" y="-5.75" width="22" height="11.5" rx="0.8" fill="#20a0a0"/><rect x="-12.2" y="-2" width="1.5" height="4" fill="#20a0a0"/><rect x="-6.1" y="-4.25" width="2.1" height="8.5" fill="#ffffff" opacity=".92"/><rect x="1.5" y="-4.25" width="2.1" height="8.5" fill="#ffffff" opacity=".92"/><path d="M4.0 -5.15 H8.0 Q10.2 -4.75 10.2 0.0 Q10.2 4.75 8.0 5.15 H4.0" fill="none" stroke="#ffffff" stroke-width=".8" opacity=".85"/></g><g transform="translate(457 283.7) rotate(0)"><rect x="-11.0" y="-5.75" width="22" height="11.5" rx="0.8" fill="#20a0a0"/><rect x="-12.2" y="-2" width="1.5" height="4" fill="#20a0a0"/><rect x="-6.1" y="-4.25" width="2.1" height="8.5" fill="#ffffff" opacity=".92"/><rect x="1.5" y="-4.25" width="2.1" height="8.5" fill="#ffffff" opacity=".92"/><path d="M4.0 -5.15 H8.0 Q10.2 -4.75 10.2 0.0 Q10.2 4.75 8.0 5.15 H4.0" fill="none" stroke="#ffffff" stroke-width=".8" opacity=".85"/></g><g transform="translate(570 273) rotate(-22)"><rect x="-11.0" y="-5.75" width="22" height="11.5" rx="0.8" fill="#20a0a0"/><rect x="-12.2" y="-2" width="1.5" height="4" fill="#20a0a0"/><rect x="-6.1" y="-4.25" width="2.1" height="8.5" fill="#ffffff" opacity=".92"/><rect x="1.5" y="-4.25" width="2.1" height="8.5" fill="#ffffff" opacity=".92"/><path d="M4.0 -5.15 H8.0 Q10.2 -4.75 10.2 0.0 Q10.2 4.75 8.0 5.15 H4.0" fill="none" stroke="#ffffff" stroke-width=".8" opacity=".85"/></g><g transform="translate(398 310.7) rotate(0)"><rect x="-11.0" y="-5.75" width="22" height="11.5" rx="0.8" fill="#e020e0"/><rect x="-12.2" y="-2" width="1.5" height="4" fill="#e020e0"/><rect x="-6.1" y="-4.25" width="2.1" height="8.5" fill="#ffffff" opacity=".92"/><rect x="1.5" y="-4.25" width="2.1" height="8.5" fill="#ffffff" opacity=".92"/><path d="M4.0 -5.15 H8.0 Q10.2 -4.75 10.2 0.0 Q10.2 4.75 8.0 5.15 H4.0" fill="none" stroke="#ffffff" stroke-width=".8" opacity=".85"/></g><g transform="translate(563 308) rotate(0)"><rect x="-11.0" y="-5.75" width="22" height="11.5" rx="0.8" fill="#e82020"/><rect x="-12.2" y="-2" width="1.5" height="4" fill="#e82020"/><rect x="-6.1" y="-4.25" width="2.1" height="8.5" fill="#ffffff" opacity=".92"/><rect x="1.5" y="-4.25" width="2.1" height="8.5" fill="#ffffff" opacity=".92"/><path d="M4.0 -5.15 H8.0 Q10.2 -4.75 10.2 0.0 Q10.2 4.75 8.0 5.15 H4.0" fill="none" stroke="#ffffff" stroke-width=".8" opacity=".85"/></g><g transform="translate(655.5 308) rotate(0)"><rect x="-11.0" y="-5.75" width="22" height="11.5" rx="0.8" fill="#e82020"/><rect x="-12.2" y="-2" width="1.5" height="4" fill="#e82020"/><rect x="-6.1" y="-4.25" width="2.1" height="8.5" fill="#ffffff" opacity=".92"/><rect x="1.5" y="-4.25" width="2.1" height="8.5" fill="#ffffff" opacity=".92"/><path d="M4.0 -5.15 H8.0 Q10.2 -4.75 10.2 0.0 Q10.2 4.75 8.0 5.15 H4.0" fill="none" stroke="#ffffff" stroke-width=".8" opacity=".85"/></g><g transform="translate(705 292.7) rotate(0)"><rect x="-11.0" y="-5.75" width="22" height="11.5" rx="0.8" fill="#e82020"/><rect x="-12.2" y="-2" width="1.5" height="4" fill="#e82020"/><rect x="-6.1" y="-4.25" width="2.1" height="8.5" fill="#ffffff" opacity=".92"/><rect x="1.5" y="-4.25" width="2.1" height="8.5" fill="#ffffff" opacity=".92"/><path d="M4.0 -5.15 H8.0 Q10.2 -4.75 10.2 0.0 Q10.2 4.75 8.0 5.15 H4.0" fill="none" stroke="#ffffff" stroke-width=".8" opacity=".85"/></g><g transform="translate(757 292.7) rotate(0)"><rect x="-11.0" y="-5.75" width="22" height="11.5" rx="0.8" fill="#e82020"/><rect x="-12.2" y="-2" width="1.5" height="4" fill="#e82020"/><rect x="-6.1" y="-4.25" width="2.1" height="8.5" fill="#ffffff" opacity=".92"/><rect x="1.5" y="-4.25" width="2.1" height="8.5" fill="#ffffff" opacity=".92"/><path d="M4.0 -5.15 H8.0 Q10.2 -4.75 10.2 0.0 Q10.2 4.75 8.0 5.15 H4.0" fill="none" stroke="#ffffff" stroke-width=".8" opacity=".85"/></g><g transform="translate(863 292.7) rotate(0)"><rect x="-11.0" y="-5.75" width="22" height="11.5" rx="0.8" fill="#e82020"/><rect x="-12.2" y="-2" width="1.5" height="4" fill="#e82020"/><rect x="-6.1" y="-4.25" width="2.1" height="8.5" fill="#ffffff" opacity=".92"/><rect x="1.5" y="-4.25" width="2.1" height="8.5" fill="#ffffff" opacity=".92"/><path d="M4.0 -5.15 H8.0 Q10.2 -4.75 10.2 0.0 Q10.2 4.75 8.0 5.15 H4.0" fill="none" stroke="#ffffff" stroke-width=".8" opacity=".85"/></g><g transform="translate(755 307.4) rotate(0)"><rect x="-11.0" y="-5.75" width="22" height="11.5" rx="0.8" fill="#e82020"/><rect x="-12.2" y="-2" width="1.5" height="4" fill="#e82020"/><rect x="-6.1" y="-4.25" width="2.1" height="8.5" fill="#ffffff" opacity=".92"/><rect x="1.5" y="-4.25" width="2.1" height="8.5" fill="#ffffff" opacity=".92"/><path d="M4.0 -5.15 H8.0 Q10.2 -4.75 10.2 0.0 Q10.2 4.75 8.0 5.15 H4.0" fill="none" stroke="#ffffff" stroke-width=".8" opacity=".85"/></g><g transform="translate(863 307.4) rotate(0)"><rect x="-11.0" y="-5.75" width="22" height="11.5" rx="0.8" fill="#e82020"/><rect x="-12.2" y="-2" width="1.5" height="4" fill="#e82020"/><rect x="-6.1" y="-4.25" width="2.1" height="8.5" fill="#ffffff" opacity=".92"/><rect x="1.5" y="-4.25" width="2.1" height="8.5" fill="#ffffff" opacity=".92"/><path d="M4.0 -5.15 H8.0 Q10.2 -4.75 10.2 0.0 Q10.2 4.75 8.0 5.15 H4.0" fill="none" stroke="#ffffff" stroke-width=".8" opacity=".85"/></g><g transform="translate(659 386) rotate(90)"><rect x="-14.0" y="-4.5" width="28" height="9" rx="0.8" fill="#e82020"/><rect x="-15.2" y="-2" width="1.5" height="4" fill="#e82020"/><rect x="-9.1" y="-3.0" width="2.1" height="6" fill="#ffffff" opacity=".92"/><rect x="-1.5" y="-3.0" width="2.1" height="6" fill="#ffffff" opacity=".92"/><path d="M1.0 -3.9 H11.0 Q13.2 -3.5 13.2 0.0 Q13.2 3.5 11.0 3.9 H1.0" fill="none" stroke="#ffffff" stroke-width=".8" opacity=".85"/></g><g transform="translate(751 236.3) rotate(180)"><rect x="-11.0" y="-5.75" width="22" height="11.5" rx="0.8" fill="#2030e0"/><rect x="-12.2" y="-2" width="1.5" height="4" fill="#2030e0"/><rect x="-6.1" y="-4.25" width="2.1" height="8.5" fill="#ffffff" opacity=".92"/><rect x="1.5" y="-4.25" width="2.1" height="8.5" fill="#ffffff" opacity=".92"/><path d="M4.0 -5.15 H8.0 Q10.2 -4.75 10.2 0.0 Q10.2 4.75 8.0 5.15 H4.0" fill="none" stroke="#ffffff" stroke-width=".8" opacity=".85"/></g><g transform="translate(830 236.3) rotate(180)"><rect x="-11.0" y="-5.75" width="22" height="11.5" rx="0.8" fill="#2030e0"/><rect x="-12.2" y="-2" width="1.5" height="4" fill="#2030e0"/><rect x="-6.1" y="-4.25" width="2.1" height="8.5" fill="#ffffff" opacity=".92"/><rect x="1.5" y="-4.25" width="2.1" height="8.5" fill="#ffffff" opacity=".92"/><path d="M4.0 -5.15 H8.0 Q10.2 -4.75 10.2 0.0 Q10.2 4.75 8.0 5.15 H4.0" fill="none" stroke="#ffffff" stroke-width=".8" opacity=".85"/></g><g transform="translate(857 236.3) rotate(180)"><rect x="-11.0" y="-5.75" width="22" height="11.5" rx="0.8" fill="#2030e0"/><rect x="-12.2" y="-2" width="1.5" height="4" fill="#2030e0"/><rect x="-6.1" y="-4.25" width="2.1" height="8.5" fill="#ffffff" opacity=".92"/><rect x="1.5" y="-4.25" width="2.1" height="8.5" fill="#ffffff" opacity=".92"/><path d="M4.0 -5.15 H8.0 Q10.2 -4.75 10.2 0.0 Q10.2 4.75 8.0 5.15 H4.0" fill="none" stroke="#ffffff" stroke-width=".8" opacity=".85"/></g><g transform="translate(885 236.3) rotate(180)"><rect x="-11.0" y="-5.75" width="22" height="11.5" rx="0.8" fill="#2030e0"/><rect x="-12.2" y="-2" width="1.5" height="4" fill="#2030e0"/><rect x="-6.1" y="-4.25" width="2.1" height="8.5" fill="#ffffff" opacity=".92"/><rect x="1.5" y="-4.25" width="2.1" height="8.5" fill="#ffffff" opacity=".92"/><path d="M4.0 -5.15 H8.0 Q10.2 -4.75 10.2 0.0 Q10.2 4.75 8.0 5.15 H4.0" fill="none" stroke="#ffffff" stroke-width=".8" opacity=".85"/></g><g transform="translate(914.5 236.3) rotate(180)"><rect x="-11.0" y="-5.75" width="22" height="11.5" rx="0.8" fill="#2030e0"/><rect x="-12.2" y="-2" width="1.5" height="4" fill="#2030e0"/><rect x="-6.1" y="-4.25" width="2.1" height="8.5" fill="#ffffff" opacity=".92"/><rect x="1.5" y="-4.25" width="2.1" height="8.5" fill="#ffffff" opacity=".92"/><path d="M4.0 -5.15 H8.0 Q10.2 -4.75 10.2 0.0 Q10.2 4.75 8.0 5.15 H4.0" fill="none" stroke="#ffffff" stroke-width=".8" opacity=".85"/></g><g transform="translate(751 253) rotate(180)"><rect x="-11.0" y="-5.75" width="22" height="11.5" rx="0.8" fill="#2030e0"/><rect x="-12.2" y="-2" width="1.5" height="4" fill="#2030e0"/><rect x="-6.1" y="-4.25" width="2.1" height="8.5" fill="#ffffff" opacity=".92"/><rect x="1.5" y="-4.25" width="2.1" height="8.5" fill="#ffffff" opacity=".92"/><path d="M4.0 -5.15 H8.0 Q10.2 -4.75 10.2 0.0 Q10.2 4.75 8.0 5.15 H4.0" fill="none" stroke="#ffffff" stroke-width=".8" opacity=".85"/></g><g transform="translate(806.5 253) rotate(180)"><rect x="-11.0" y="-5.75" width="22" height="11.5" rx="0.8" fill="#2030e0"/><rect x="-12.2" y="-2" width="1.5" height="4" fill="#2030e0"/><rect x="-6.1" y="-4.25" width="2.1" height="8.5" fill="#ffffff" opacity=".92"/><rect x="1.5" y="-4.25" width="2.1" height="8.5" fill="#ffffff" opacity=".92"/><path d="M4.0 -5.15 H8.0 Q10.2 -4.75 10.2 0.0 Q10.2 4.75 8.0 5.15 H4.0" fill="none" stroke="#ffffff" stroke-width=".8" opacity=".85"/></g><g transform="translate(833.5 253) rotate(180)"><rect x="-11.0" y="-5.75" width="22" height="11.5" rx="0.8" fill="#2030e0"/><rect x="-12.2" y="-2" width="1.5" height="4" fill="#2030e0"/><rect x="-6.1" y="-4.25" width="2.1" height="8.5" fill="#ffffff" opacity=".92"/><rect x="1.5" y="-4.25" width="2.1" height="8.5" fill="#ffffff" opacity=".92"/><path d="M4.0 -5.15 H8.0 Q10.2 -4.75 10.2 0.0 Q10.2 4.75 8.0 5.15 H4.0" fill="none" stroke="#ffffff" stroke-width=".8" opacity=".85"/></g><g transform="translate(860 253) rotate(180)"><rect x="-11.0" y="-5.75" width="22" height="11.5" rx="0.8" fill="#2030e0"/><rect x="-12.2" y="-2" width="1.5" height="4" fill="#2030e0"/><rect x="-6.1" y="-4.25" width="2.1" height="8.5" fill="#ffffff" opacity=".92"/><rect x="1.5" y="-4.25" width="2.1" height="8.5" fill="#ffffff" opacity=".92"/><path d="M4.0 -5.15 H8.0 Q10.2 -4.75 10.2 0.0 Q10.2 4.75 8.0 5.15 H4.0" fill="none" stroke="#ffffff" stroke-width=".8" opacity=".85"/></g><g transform="translate(889.5 253) rotate(180)"><rect x="-11.0" y="-5.75" width="22" height="11.5" rx="0.8" fill="#2030e0"/><rect x="-12.2" y="-2" width="1.5" height="4" fill="#2030e0"/><rect x="-6.1" y="-4.25" width="2.1" height="8.5" fill="#ffffff" opacity=".92"/><rect x="1.5" y="-4.25" width="2.1" height="8.5" fill="#ffffff" opacity=".92"/><path d="M4.0 -5.15 H8.0 Q10.2 -4.75 10.2 0.0 Q10.2 4.75 8.0 5.15 H4.0" fill="none" stroke="#ffffff" stroke-width=".8" opacity=".85"/></g><g transform="translate(917 253) rotate(180)"><rect x="-11.0" y="-5.75" width="22" height="11.5" rx="0.8" fill="#2030e0"/><rect x="-12.2" y="-2" width="1.5" height="4" fill="#2030e0"/><rect x="-6.1" y="-4.25" width="2.1" height="8.5" fill="#ffffff" opacity=".92"/><rect x="1.5" y="-4.25" width="2.1" height="8.5" fill="#ffffff" opacity=".92"/><path d="M4.0 -5.15 H8.0 Q10.2 -4.75 10.2 0.0 Q10.2 4.75 8.0 5.15 H4.0" fill="none" stroke="#ffffff" stroke-width=".8" opacity=".85"/></g><rect x="767" y="231" width="14" height="11" rx="2" fill="#2030e0"/><rect x="781" y="231" width="36" height="11" fill="#2030e0"/><path d="M781 236.6 H817" stroke="#e8e8ff" stroke-width=".9"/><path d="M770 233 Q767.5 236.5 770 240" fill="none" stroke="#dde" stroke-width=".8"/><path d="M770 237 L787 237.5" stroke="#f0e020" stroke-width="1.6"/><ellipse cx="774" cy="237" rx="2.2" ry="1.4" fill="#f0e020"/><path d="M778 235 L781 233.5" stroke="#f0e020" stroke-width="1.4"/><rect x="767" y="247.5" width="22" height="11" rx="2" fill="#2030e0"/><path d="M770 253 H788" stroke="#f0e020" stroke-width="1.6"/><ellipse cx="774" cy="253" rx="2.4" ry="1.5" fill="#f0e020"/><ellipse cx="781" cy="253.3" rx="2.4" ry="1.5" fill="#f0e020"/><circle cx="777.5" cy="253.2" r="1" fill="#111"/><path d="M770 249.5 Q767.5 253 770 256.5" fill="none" stroke="#dde" stroke-width=".8"/><path d="M631 172 L636 172.5 L628 217 L623 216.5Z M637 173 L642 173.5 L634 218 L629 217.5Z" fill="#20a8a8"/><rect x="632" y="166" width="9" height="6" fill="none" stroke="#20a8a8" stroke-width="1.8" transform="rotate(10 636 169)"/><path d="M433 281.3 H452" stroke="#222" stroke-width="1.3"/><path d="M455 281.3 L449 279.3 L449 283.3Z" fill="#222"/><path d="M433 296.2 H452" stroke="#222" stroke-width="1.3"/><path d="M455 296.2 L449 294.2 L449 298.2Z" fill="#222"/><path d="M433 311 H452" stroke="#222" stroke-width="1.3"/><path d="M455 311 L449 309 L449 313Z" fill="#222"/><text x="0" y="0" transform="translate(423 218.5) rotate(90) scale(0.75 1.25)" font-size="12" font-weight="bold" fill="#111" font-family="Liberation Sans">BUS</text><text x="0" y="0" transform="translate(661 117) rotate(-80)" font-size="9" font-weight="bold" fill="#111" font-family="Liberation Sans">BUS</text><text x="0" y="0" transform="translate(621 117) rotate(-82)" font-size="8" fill="#222" font-family="Liberation Sans">Ham</text><text x="368.5" y="259.5" font-size="8" font-weight="bold" fill="#333" font-family="Liberation Sans">Berlin Street</text><text x="814" y="296" font-size="8" font-weight="bold" fill="#333" font-family="Liberation Sans">Berlin Street</text><text x="506" y="222" font-size="5" fill="#222" font-family="Liberation Sans">23b</text><text x="518" y="222" font-size="5" fill="#222" font-family="Liberation Sans">7h</text><text x="507" y="274" font-size="5" fill="#222" font-family="Liberation Sans">24b</text><text x="507" y="280" font-size="5" fill="#222" font-family="Liberation Sans">24a</text><text x="489" y="302" font-size="5" fill="#222" font-family="Liberation Sans">3b</text><text x="508" y="316" font-size="5" fill="#222" font-family="Liberation Sans">23a</text><text x="590" y="162" font-size="5" fill="#222" font-family="Liberation Sans">6b</text><text x="583" y="173" font-size="5" fill="#222" font-family="Liberation Sans">26a</text><text x="603" y="174" font-size="5" fill="#222" font-family="Liberation Sans">26a</text><text x="634" y="183" font-size="5" fill="#222" font-family="Liberation Sans">26c</text><text x="648" y="183" font-size="5" fill="#222" font-family="Liberation Sans">26b</text><text x="596" y="354" font-size="5" fill="#222" font-family="Liberation Sans">21b</text><text x="596" y="348" font-size="5" fill="#222" font-family="Liberation Sans">22b</text><text x="634" y="348" font-size="5" fill="#222" font-family="Liberation Sans">22a</text><text x="670" y="348" font-size="5" fill="#222" font-family="Liberation Sans">21a</text><text x="645" y="363" font-size="5" fill="#222" font-family="Liberation Sans">2b</text><text x="741" y="258" font-size="5" fill="#222" font-family="Liberation Sans">1b</text><text x="723" y="270" font-size="5" fill="#222" font-family="Liberation Sans">1c</text></svg><div class="a t" style="left:calc(-227px + 478px);top:calc(-101px + 244.5px);font-size:10.5px;color:#ff1a1a;font-weight:bold">V4</div><div class="a t" style="left:calc(-227px + 497px);top:calc(-101px + 248.5px);font-size:10.5px;color:#ff1a1a;font-weight:bold">P23</div><div class="a t" style="left:calc(-227px + 518px);top:calc(-101px + 252.5px);font-size:10.5px;color:#ff1a1a;font-weight:bold">P7</div><div class="a t" style="left:calc(-227px + 467.5px);top:calc(-101px + 328px);font-size:10.5px;color:#ff1a1a;font-weight:bold">V3</div><div class="a t" style="left:calc(-227px + 498.5px);top:calc(-101px + 189px);font-size:10.5px;color:#ff1a1a;font-weight:bold">P24</div><div class="a t" style="left:calc(-227px + 558px);top:calc(-101px + 148px);font-size:10.5px;color:#ff1a1a;font-weight:bold">V5</div><div class="a t" style="left:calc(-227px + 572.5px);top:calc(-101px + 139px);font-size:10.5px;color:#ff1a1a;font-weight:bold">V6</div><div class="a t" style="left:calc(-227px + 611px);top:calc(-101px + 157.5px);font-size:10.5px;color:#ff1a1a;font-weight:bold">P25</div><div class="a t" style="left:calc(-227px + 661px);top:calc(-101px + 166.5px);font-size:10.5px;color:#ff1a1a;font-weight:bold">P26</div><div class="a t" style="left:calc(-227px + 730px);top:calc(-101px + 193.5px);font-size:10.5px;color:#ff1a1a;font-weight:bold">V1</div><div class="a t" style="left:calc(-227px + 561px);top:calc(-101px + 354.5px);font-size:10.5px;color:#ff1a1a;font-weight:bold">P22</div><div class="a t" style="left:calc(-227px + 613px);top:calc(-101px + 339.5px);font-size:10.5px;color:#ff1a1a;font-weight:bold">P21</div><div class="a t" style="left:calc(-227px + 686px);top:calc(-101px + 372.5px);font-size:10.5px;color:#ff1a1a;font-weight:bold">V2</div><div class="a t" style="left:calc(-227px + 519px);top:calc(-101px + 192.5px);font-size:9.4px;color:#1010ff;font-weight:bold;letter-spacing:-0.6px">PB3</div><div class="a t" style="left:calc(-227px + 534px);top:calc(-101px + 253.5px);font-size:9.4px;color:#1010ff;font-weight:bold;letter-spacing:-0.6px">PB2</div><div class="a t" style="left:calc(-227px + 499px);top:calc(-101px + 343.0px);font-size:9.4px;color:#1010ff;font-weight:bold;letter-spacing:-0.6px">PB1</div><div class="a t" style="left:calc(-227px + 590px);top:calc(-101px + 123.5px);font-size:9.4px;color:#1010ff;font-weight:bold;letter-spacing:-0.6px">D6_1</div><div class="a t" style="left:calc(-227px + 605.5px);top:calc(-101px + 130.5px);font-size:9.4px;color:#1010ff;font-weight:bold;letter-spacing:-0.6px">D6_2</div><div class="a t" style="left:calc(-227px + 353px);top:calc(-101px + 277.5px);font-size:9.4px;color:#1010ff;font-weight:bold;letter-spacing:-0.6px">D4_2</div><div class="a t" style="left:calc(-227px + 634px);top:calc(-101px + 390.5px);font-size:9.4px;color:#1010ff;font-weight:bold;letter-spacing:-0.6px">D2_2</div><div class="a t" style="left:calc(-227px + 451px);top:calc(-101px + 275.0px);font-size:9.4px;color:#1010ff;font-weight:bold;letter-spacing:-0.6px">D4_1</div></div>
<div class="a" style="left:520px;top:119.5px;width:58px;height:18px;background:linear-gradient(#f4f4f4,#e8e8e8 50%,#dadada 51%,#e0e0e0);border:1px solid #8a8a8a;border-radius:2px"></div><div class="a t" style="left:523.5px;top:123.0px;font-size:11px;color:#1a1a2a;letter-spacing:-0.6px">R=23</div><svg class="a" style="left:566px;top:126.5px" width="8" height="5" viewBox="0 0 8 5"><path d="M0 0 H8 L4 4.5Z" fill="#111"/></svg>
<div class="a" style="left:744px;top:204px;width:58px;height:18px;background:linear-gradient(#f4f4f4,#e8e8e8 50%,#dadada 51%,#e0e0e0);border:1px solid #8a8a8a;border-radius:2px"></div><div class="a t" style="left:747.5px;top:207.5px;font-size:11px;color:#1a1a2a;letter-spacing:-0.6px">R=40</div><svg class="a" style="left:790px;top:211.0px" width="8" height="5" viewBox="0 0 8 5"><path d="M0 0 H8 L4 4.5Z" fill="#111"/></svg>
<div class="a" style="left:471.5px;top:358.5px;width:56.5px;height:17.5px;background:linear-gradient(#f4f4f4,#e8e8e8 50%,#dadada 51%,#e0e0e0);border:1px solid #8a8a8a;border-radius:2px"></div><div class="a t" style="left:475.0px;top:362.0px;font-size:11px;color:#1a1a2a;letter-spacing:-0.6px">G=14</div><svg class="a" style="left:516.0px;top:365.25px" width="8" height="5" viewBox="0 0 8 5"><path d="M0 0 H8 L4 4.5Z" fill="#111"/></svg>
<div class="a" style="left:706.5px;top:364px;width:58px;height:18px;background:linear-gradient(#f4f4f4,#e8e8e8 50%,#dadada 51%,#e0e0e0);border:1px solid #8a8a8a;border-radius:2px"></div><div class="a t" style="left:710.0px;top:367.5px;font-size:11px;color:#1a1a2a;letter-spacing:-0.6px">R=18</div><svg class="a" style="left:752.5px;top:371.0px" width="8" height="5" viewBox="0 0 8 5"><path d="M0 0 H8 L4 4.5Z" fill="#111"/></svg>
<div class="a" style="left:947px;top:101px;width:15px;height:298px;background:linear-gradient(90deg,#e6e6e6,#f2f2f2)"></div>
<svg class="a" style="left:950px;top:111px" width="9" height="5" viewBox="0 0 9 5"><path d="M0 5 L4.5 0 L9 5Z" fill="#333"/></svg>
<div class="a" style="left:948px;top:194px;width:13px;height:135px;background:linear-gradient(90deg,#ececec,#dedede 50%,#d0d0d0);border:1px solid #9a9a9a;border-radius:2px"></div>
<svg class="a" style="left:951px;top:258px" width="7" height="7" viewBox="0 0 7 7"><path d="M0 .5 H7 M0 3.5 H7 M0 6.5 H7" stroke="#666"/></svg>
<svg class="a" style="left:950px;top:387px" width="9" height="5" viewBox="0 0 9 5"><path d="M0 0 L4.5 5 L9 0Z" fill="#333"/></svg>
<div class="a" style="left:227px;top:399px;width:720px;height:15px;background:linear-gradient(#e6e6e6,#f2f2f2)"></div>
<svg class="a" style="left:233px;top:402px" width="5" height="9" viewBox="0 0 5 9"><path d="M5 0 L0 4.5 L5 9Z" fill="#333"/></svg>
<div class="a" style="left:244px;top:400px;width:520px;height:13px;background:linear-gradient(#f0f0f0,#dcdcdc 50%,#cfcfcf);border:1px solid #9a9a9a;border-radius:2px"></div>
<svg class="a" style="left:500.5px;top:403px" width="7" height="7" viewBox="0 0 7 7"><path d="M.5 0 V7 M3.5 0 V7 M6.5 0 V7" stroke="#666"/></svg>
<svg class="a" style="left:935px;top:402px" width="5" height="9" viewBox="0 0 5 9"><path d="M0 0 L5 4.5 L0 9Z" fill="#333"/></svg>
<div class="a" style="left:947px;top:399px;width:15px;height:15px;background:#f0f0f0"></div>
<div class="a" style="left:226px;top:419px;width:737px;height:13px;background:linear-gradient(#f4f4f4,#ebebeb);border:1px solid #b4b4b4;border-radius:2px"></div>
<div class="a t" style="left:229px;top:421.5px;font-size:8.6px;color:#111;letter-spacing:-0.15px">Graph. log - Protokoll_01</div>
<svg class="a" style="left:951px;top:421px" width="9" height="9" viewBox="0 0 9 9"><path d="M1 1 L8 8 M8 1 L1 8" stroke="#333" stroke-width="1.1"/></svg>
<div class="a" style="left:226px;top:433px;width:737px;height:171px;background:#fff;border-left:1px solid #a0a0a0;border-right:1px solid #dcdcdc"></div>
<div class="a" style="left:227px;top:433px;width:21px;height:171px;background:#f0f0f0"></div>
<svg class="a" style="left:229px;top:436px" width="16" height="16" viewBox="0 0 16 16"><path d="M5 2 Q13 0 14 8 Q13 15 6 14" stroke="#e03030" stroke-width="2.2" fill="none"/><path d="M2 1 L7 3 L3 7Z" fill="#e03030"/><rect x="2" y="7" width="8" height="7" fill="#f0f0f0" stroke="#777" stroke-width=".6"/><path d="M3 9 H9 M3 11 H9" stroke="#30b030" stroke-width="1"/></svg>
<div class="a" style="left:229px;top:455px;width:17px;height:1px;background:#c0c0c0"></div>
<svg class="a" style="left:229px;top:457px" width="16" height="16" viewBox="0 0 16 16"><path d="M5 1.5 L10.5 0.5 L13 5 L7.5 6.5Z" fill="#fafafa" stroke="#999" stroke-width=".6"/><path d="M1 8 L9 4.5 L15 7.5 L15 11.5 L8 15 L1 11.5Z" fill="#dedede" stroke="#8a8a8a" stroke-width=".7"/><path d="M1 8 L8 11 L15 7.5 M8 11 V15" stroke="#b0b0b0" stroke-width=".6" fill="none"/><circle cx="4.5" cy="8.8" r=".9" fill="#3c3"/><circle cx="7" cy="9.6" r=".9" fill="#e33"/></svg>
<svg class="a" style="left:228px;top:473px" width="16" height="16" viewBox="0 0 16 16"><rect x="1" y="0" width="12" height="12" rx="1" fill="#5468c0"/><rect x="3" y="0" width="8" height="6" fill="#dde2f2"/><rect x="8" y="1" width="2" height="3.5" fill="#5468c0"/><rect x="3.5" y="8" width="7" height="4" fill="#8a9ad8"/><path d="M6 14.5 H7.5 M9.5 14.5 H11 M13 14.5 H14.5" stroke="#333" stroke-width="1.3"/></svg>
<svg class="a" style="left:229px;top:490px" width="16" height="16" viewBox="0 0 16 16"><path d="M1 5 L6 5 L7 6.5 L13 6.5 L13 14 L1 14Z" fill="#e0b45a"/><path d="M2.5 9 L15 9 L13 14.5 L1 14.5Z" fill="#f6d37e" stroke="#c0902e" stroke-width=".7"/><path d="M9 4 Q12 1 14 4" stroke="#2a5ad8" fill="none" stroke-width="1.4"/></svg>
<svg class="a" style="left:229px;top:508px" width="16" height="16" viewBox="0 0 16 16"><rect x="1" y="4" width="14" height="11" rx="1" fill="#d83030" stroke="#902020" stroke-width=".8"/><path d="M5 4 V2 H11 V4" stroke="#555" stroke-width="1" fill="none"/><path d="M3 9 L5 11 L8 6 M7 12 L9 14 L12 9" stroke="#fff" stroke-width="1.2" fill="none"/></svg>
<div class="a t" style="left:266px;top:437px;font-size:9.5px;font-weight:bold;color:#111">Tx:</div>
<div class="a t" style="left:324.6px;top:437px;width:30px;text-align:center;font-size:10px;color:#222">00</div>
<div class="a t" style="left:364.6px;top:437px;width:30px;text-align:center;font-size:10px;color:#222">10</div>
<div class="a t" style="left:403px;top:437px;width:30px;text-align:center;font-size:10px;color:#222">20</div>
<div class="a t" style="left:441.6px;top:437px;width:30px;text-align:center;font-size:10px;color:#222">10</div>
<div class="a t" style="left:480.2px;top:437px;width:30px;text-align:center;font-size:10px;color:#222">20</div>
<div class="a t" style="left:518.8px;top:437px;width:30px;text-align:center;font-size:10px;color:#222">30</div>
<div class="a t" style="left:557.4px;top:437px;width:30px;text-align:center;font-size:10px;color:#222">40</div>
<div class="a t" style="left:596.2px;top:437px;width:30px;text-align:center;font-size:10px;color:#222">50</div>
<div class="a t" style="left:635px;top:437px;width:30px;text-align:center;font-size:10px;color:#222">60</div>
<div class="a t" style="left:673.8px;top:437px;width:30px;text-align:center;font-size:10px;color:#222">70</div>
<div class="a t" style="left:693.5px;top:437px;width:30px;text-align:center;font-size:10px;color:#222">0</div>
<div class="a t" style="left:731.7px;top:437px;width:30px;text-align:center;font-size:10px;color:#222">10</div>
<div class="a t" style="left:770px;top:437px;width:30px;text-align:center;font-size:10px;color:#222">20</div>
<div class="a t" style="left:808.9px;top:437px;width:30px;text-align:center;font-size:10px;color:#222">30</div>
<div class="a t" style="left:847.4px;top:437px;width:30px;text-align:center;font-size:10px;color:#222">40</div>
<div class="a t" style="left:886px;top:437px;width:30px;text-align:center;font-size:10px;color:#222">50</div>
<div class="a t" style="left:924.6px;top:437px;width:30px;text-align:center;font-size:10px;color:#222">60</div>
<div class="a t" style="left:251px;top:471.8px;font-size:10.3px;color:#2a2a2a">LSA-Infos</div>
<div class="a t" style="left:251px;top:486.0px;font-size:10.3px;color:#2a2a2a">V1</div>
<div class="a t" style="left:251px;top:500.7px;font-size:10.3px;color:#2a2a2a">V2</div>
<div class="a t" style="left:251px;top:515.4px;font-size:10.3px;color:#2a2a2a">V3</div>
<div class="a t" style="left:251px;top:530.1px;font-size:10.3px;color:#2a2a2a">V4</div>
<div class="a t" style="left:251px;top:544.8px;font-size:10.3px;color:#2a2a2a">V5</div>
<div class="a t" style="left:251px;top:559.5px;font-size:10.3px;color:#2a2a2a">V6</div>
<div class="a t" style="left:251px;top:574.2px;font-size:10.3px;color:#2a2a2a">F7</div>
<svg class="a" style="left:0;top:0" width="972" height="644" viewBox="0 0 972 644"><path d="M248 462.6 H947" stroke="#b4b4b4" stroke-width="1"/><path d="M337.7 460 V462 M341.6 456.5 V462 M345.5 460 V462 M349.3 460 V462 M353.2 460 V462 M357.0 460 V462 M360.9 457.5 V462 M364.8 460 V462 M368.6 460 V462 M372.5 460 V462 M376.4 460 V462 M380.2 456.5 V462 M384.1 460 V462 M387.9 460 V462 M391.8 460 V462 M395.7 460 V462 M399.5 457.5 V462 M403.4 460 V462 M407.3 460 V462 M411.1 460 V462 M415.0 460 V462 M418.8 456.5 V462 M422.7 460 V462 M426.6 460 V462 M430.4 460 V462 M434.3 460 V462 M438.2 457.5 V462 M442.0 460 V462 M445.9 460 V462 M449.7 460 V462 M453.6 460 V462 M457.5 456.5 V462 M461.3 460 V462 M465.2 460 V462 M469.0 460 V462 M472.9 460 V462 M476.8 457.5 V462 M480.6 460 V462 M484.5 460 V462 M488.4 460 V462 M492.2 460 V462 M496.1 456.5 V462 M499.9 460 V462 M503.8 460 V462 M507.7 460 V462 M511.5 460 V462 M515.4 457.5 V462 M519.3 460 V462 M523.1 460 V462 M527.0 460 V462 M530.8 460 V462 M534.7 456.5 V462 M538.6 460 V462 M542.4 460 V462 M546.3 460 V462 M550.1 460 V462 M554.0 457.5 V462 M557.9 460 V462 M561.7 460 V462 M565.6 460 V462 M569.5 460 V462 M573.3 456.5 V462 M577.2 460 V462 M581.0 460 V462 M584.9 460 V462 M588.8 460 V462 M592.6 457.5 V462 M596.5 460 V462 M600.4 460 V462 M604.2 460 V462 M608.1 460 V462 M611.9 456.5 V462 M615.8 460 V462 M619.7 460 V462 M623.5 460 V462 M627.4 460 V462 M631.2 457.5 V462 M635.1 460 V462 M639.0 460 V462 M642.8 460 V462 M646.7 460 V462 M650.6 456.5 V462 M654.4 460 V462 M658.3 460 V462 M662.1 460 V462 M666.0 460 V462 M669.9 457.5 V462 M673.7 460 V462 M677.6 460 V462 M681.5 460 V462 M685.3 460 V462 M689.2 456.5 V462 M693.0 460 V462 M696.9 460 V462 M700.8 460 V462 M704.6 460 V462 M708.5 457.5 V462 M712.4 460 V462 M716.2 460 V462 M720.1 460 V462 M723.9 460 V462 M727.8 456.5 V462 M731.7 460 V462 M735.5 460 V462 M739.4 460 V462 M743.2 460 V462 M747.1 457.5 V462 M751.0 460 V462 M754.8 460 V462 M758.7 460 V462 M762.6 460 V462 M766.4 456.5 V462 M770.3 460 V462 M774.1 460 V462 M778.0 460 V462 M781.9 460 V462 M785.7 457.5 V462 M789.6 460 V462 M793.5 460 V462 M797.3 460 V462 M801.2 460 V462 M805.0 456.5 V462 M808.9 460 V462 M812.8 460 V462 M816.6 460 V462 M820.5 460 V462 M824.4 457.5 V462 M828.2 460 V462 M832.1 460 V462 M835.9 460 V462 M839.8 460 V462 M843.7 456.5 V462 M847.5 460 V462 M851.4 460 V462 M855.2 460 V462 M859.1 460 V462 M863.0 457.5 V462 M866.8 460 V462 M870.7 460 V462 M874.6 460 V462 M878.4 460 V462 M882.3 456.5 V462 M886.1 460 V462 M890.0 460 V462 M893.9 460 V462 M897.7 460 V462 M901.6 457.5 V462 M905.5 460 V462 M909.3 460 V462 M913.2 460 V462 M917.0 460 V462 M920.9 456.5 V462 M924.8 460 V462 M928.6 460 V462 M932.5 460 V462 M936.3 460 V462 M940.2 457.5 V462 M944.1 460 V462 " stroke="#333" stroke-width="1"/><path d="M333.8 452.2 H341.8 L337.8 458.4Z" fill="#1414e8" stroke="#101060" stroke-width=".6"/><path d="M337.7 468.3 V585.6 M345.5 468.3 V585.6 M349.3 468.3 V585.6 M353.2 468.3 V585.6 M357.0 468.3 V585.6 M364.8 468.3 V585.6 M368.6 468.3 V585.6 M372.5 468.3 V585.6 M376.4 468.3 V585.6 M384.1 468.3 V585.6 M387.9 468.3 V585.6 M391.8 468.3 V585.6 M395.7 468.3 V585.6 M403.4 468.3 V585.6 M407.3 468.3 V585.6 M411.1 468.3 V585.6 M415.0 468.3 V585.6 M422.7 468.3 V585.6 M426.6 468.3 V585.6 M430.4 468.3 V585.6 M434.3 468.3 V585.6 M442.0 468.3 V585.6 M445.9 468.3 V585.6 M449.7 468.3 V585.6 M453.6 468.3 V585.6 M461.3 468.3 V585.6 M465.2 468.3 V585.6 M469.0 468.3 V585.6 M472.9 468.3 V585.6 M480.6 468.3 V585.6 M484.5 468.3 V585.6 M488.4 468.3 V585.6 M492.2 468.3 V585.6 M499.9 468.3 V585.6 M503.8 468.3 V585.6 M507.7 468.3 V585.6 M511.5 468.3 V585.6 M519.3 468.3 V585.6 M523.1 468.3 V585.6 M527.0 468.3 V585.6 M530.8 468.3 V585.6 M538.6 468.3 V585.6 M542.4 468.3 V585.6 M546.3 468.3 V585.6 M550.1 468.3 V585.6 M557.9 468.3 V585.6 M561.7 468.3 V585.6 M565.6 468.3 V585.6 M569.5 468.3 V585.6 M577.2 468.3 V585.6 M581.0 468.3 V585.6 M584.9 468.3 V585.6 M588.8 468.3 V585.6 M596.5 468.3 V585.6 M600.4 468.3 V585.6 M604.2 468.3 V585.6 M608.1 468.3 V585.6 M615.8 468.3 V585.6 M619.7 468.3 V585.6 M623.5 468.3 V585.6 M627.4 468.3 V585.6 M635.1 468.3 V585.6 M639.0 468.3 V585.6 M642.8 468.3 V585.6 M646.7 468.3 V585.6 M654.4 468.3 V585.6 M658.3 468.3 V585.6 M662.1 468.3 V585.6 M666.0 468.3 V585.6 M673.7 468.3 V585.6 M677.6 468.3 V585.6 M681.5 468.3 V585.6 M685.3 468.3 V585.6 M693.0 468.3 V585.6 M696.9 468.3 V585.6 M700.8 468.3 V585.6 M704.6 468.3 V585.6 M712.4 468.3 V585.6 M716.2 468.3 V585.6 M720.1 468.3 V585.6 M723.9 468.3 V585.6 M731.7 468.3 V585.6 M735.5 468.3 V585.6 M739.4 468.3 V585.6 M743.2 468.3 V585.6 M751.0 468.3 V585.6 M754.8 468.3 V585.6 M758.7 468.3 V585.6 M762.6 468.3 V585.6 M770.3 468.3 V585.6 M774.1 468.3 V585.6 M778.0 468.3 V585.6 M781.9 468.3 V585.6 M789.6 468.3 V585.6 M793.5 468.3 V585.6 M797.3 468.3 V585.6 M801.2 468.3 V585.6 M808.9 468.3 V585.6 M812.8 468.3 V585.6 M816.6 468.3 V585.6 M820.5 468.3 V585.6 M828.2 468.3 V585.6 M832.1 468.3 V585.6 M835.9 468.3 V585.6 M839.8 468.3 V585.6 M847.5 468.3 V585.6 M851.4 468.3 V585.6 M855.2 468.3 V585.6 M859.1 468.3 V585.6 M866.8 468.3 V585.6 M870.7 468.3 V585.6 M874.6 468.3 V585.6 M878.4 468.3 V585.6 M886.1 468.3 V585.6 M890.0 468.3 V585.6 M893.9 468.3 V585.6 M897.7 468.3 V585.6 M905.5 468.3 V585.6 M909.3 468.3 V585.6 M913.2 468.3 V585.6 M917.0 468.3 V585.6 M924.8 468.3 V585.6 M928.6 468.3 V585.6 M932.5 468.3 V585.6 M936.3 468.3 V585.6 M944.1 468.3 V585.6 " stroke="#cdcdcd" stroke-width="1.1"/><path d="M337 468.3 H947 M337 483.0 H947 M337 497.7 H947 M337 512.4 H947 M337 527.1 H947 M337 541.8 H947 M337 556.5 H947 M337 571.2 H947 " stroke="#cfcfcf" stroke-width="1"/><path d="M341.6 468.3 V585.6 M360.9 468.3 V585.6 M380.2 468.3 V585.6 M399.5 468.3 V585.6 M418.8 468.3 V585.6 M438.2 468.3 V585.6 M457.5 468.3 V585.6 M476.8 468.3 V585.6 M496.1 468.3 V585.6 M515.4 468.3 V585.6 M534.7 468.3 V585.6 M554.0 468.3 V585.6 M573.3 468.3 V585.6 M592.6 468.3 V585.6 M611.9 468.3 V585.6 M631.2 468.3 V585.6 M650.6 468.3 V585.6 M669.9 468.3 V585.6 M689.2 468.3 V585.6 M708.5 468.3 V585.6 M727.8 468.3 V585.6 M747.1 468.3 V585.6 M766.4 468.3 V585.6 M785.7 468.3 V585.6 M805.0 468.3 V585.6 M824.4 468.3 V585.6 M843.7 468.3 V585.6 M863.0 468.3 V585.6 M882.3 468.3 V585.6 M901.6 468.3 V585.6 M920.9 468.3 V585.6 M940.2 468.3 V585.6 " stroke="#3a3a3a" stroke-width="1.2"/><path d="M337.4 464 V586" stroke="#2a2aff" stroke-width="1.3"/><path d="M339.5 468.5 V483.5 M343.6 468.5 V483.5 M420.6 468.5 V483.5" stroke="#1a1af0" stroke-width="1.2"/><rect x="337.5" y="488.90000000000003" width="46.5" height="1.7" fill="#111"/><rect x="384" y="487.1" width="239.20000000000005" height="5.8" fill="#00ee00"/><rect x="623.2" y="487.1" width="11.599999999999909" height="3" fill="#ffee00"/><rect x="634.8" y="489.90000000000003" width="165.9000000000001" height="3" fill="#ff0a0a"/><rect x="800.7" y="487.1" width="112.69999999999993" height="5.8" fill="#00ee00"/><rect x="913.4" y="487.1" width="11.600000000000023" height="3" fill="#ffee00"/><rect x="925" y="489.90000000000003" width="22" height="3" fill="#ff0a0a"/><rect x="337.5" y="503.6" width="3.5" height="1.7" fill="#111"/><rect x="341" y="501.8" width="11.600000000000023" height="3" fill="#ffee00"/><rect x="352.6" y="504.6" width="294.6" height="3" fill="#ff0a0a"/><rect x="647.2" y="501.8" width="3.2999999999999545" height="3" fill="#ffee00"/><rect x="647.2" y="504.6" width="3.2999999999999545" height="3" fill="#ff0a0a"/><rect x="650.5" y="501.8" width="58.39999999999998" height="5.8" fill="#00ee00"/><rect x="708.9" y="501.8" width="10.800000000000068" height="3" fill="#ffee00"/><rect x="719.7" y="504.6" width="218.69999999999993" height="3" fill="#ff0a0a"/><rect x="938.4" y="501.8" width="2.6000000000000227" height="3" fill="#ffee00"/><rect x="938.4" y="504.6" width="2.6000000000000227" height="3" fill="#ff0a0a"/><rect x="941" y="501.8" width="6" height="5.8" fill="#00ee00"/><path d="M337.5 504.40000000000003 H341.3 V507.6" stroke="#111" stroke-width="1.3" fill="none"/><rect x="337.5" y="518.3" width="46.5" height="1.7" fill="#111"/><rect x="384" y="516.5" width="239.20000000000005" height="5.8" fill="#00ee00"/><rect x="623.2" y="516.5" width="11.599999999999909" height="3" fill="#ffee00"/><rect x="634.8" y="519.3" width="86.20000000000005" height="3" fill="#ff0a0a"/><rect x="721" y="516.5" width="2.6000000000000227" height="3" fill="#ffee00"/><rect x="721" y="519.3" width="2.6000000000000227" height="3" fill="#ff0a0a"/><rect x="723.6" y="516.5" width="189.79999999999995" height="5.8" fill="#00ee00"/><rect x="913.4" y="516.5" width="11.600000000000023" height="3" fill="#ffee00"/><rect x="925" y="519.3" width="22" height="3" fill="#ff0a0a"/><rect x="337.5" y="533.0" width="3.5" height="1.7" fill="#111"/><rect x="341" y="531.2" width="11.600000000000023" height="3" fill="#ffee00"/><rect x="352.6" y="534.0" width="370.9" height="3" fill="#ff0a0a"/><rect x="723.5" y="531.2" width="3.5" height="3" fill="#ffee00"/><rect x="723.5" y="534.0" width="3.5" height="3" fill="#ff0a0a"/><rect x="727" y="531.2" width="35" height="5.8" fill="#00ee00"/><rect x="762" y="531.2" width="11.700000000000045" height="3" fill="#ffee00"/><rect x="773.7" y="534.0" width="173.29999999999995" height="3" fill="#ff0a0a"/><path d="M337.5 533.8000000000001 H341.3 V537.0" stroke="#111" stroke-width="1.3" fill="none"/><rect x="337.5" y="547.6999999999999" width="397.5" height="1.7" fill="#111"/><rect x="735" y="545.9" width="50.299999999999955" height="5.8" fill="#00ee00"/><rect x="785.3" y="545.9" width="11.5" height="3" fill="#ffee00"/><rect x="796.8" y="547.6999999999999" width="150.20000000000005" height="1.7" fill="#111"/><rect x="337.5" y="562.4" width="3.5" height="1.7" fill="#111"/><rect x="341" y="560.6" width="11.600000000000023" height="3" fill="#ffee00"/><rect x="352.6" y="563.4" width="293.9" height="3" fill="#ff0a0a"/><rect x="646.5" y="560.6" width="3.5" height="3" fill="#ffee00"/><rect x="646.5" y="563.4" width="3.5" height="3" fill="#ff0a0a"/><rect x="650" y="560.6" width="38.799999999999955" height="5.8" fill="#00ee00"/><rect x="688.8" y="560.6" width="11.600000000000023" height="3" fill="#ffee00"/><rect x="700.4" y="563.4" width="238.0" height="3" fill="#ff0a0a"/><rect x="938.4" y="560.6" width="2.6000000000000227" height="3" fill="#ffee00"/><rect x="938.4" y="563.4" width="2.6000000000000227" height="3" fill="#ff0a0a"/><rect x="941" y="560.6" width="6" height="5.8" fill="#00ee00"/><path d="M337.5 563.2 H341.3 V566.4" stroke="#111" stroke-width="1.3" fill="none"/><rect x="337.5" y="577.0999999999999" width="609.5" height="1.7" fill="#111"/><path d="M250 483.4 H335.5" stroke="#333" stroke-width="1.1"/><path d="M250 498.09999999999997 H335.5" stroke="#333" stroke-width="1.1"/><path d="M250 512.8 H335.5" stroke="#333" stroke-width="1.1"/><path d="M250 527.5 H335.5" stroke="#333" stroke-width="1.1"/><path d="M250 542.1999999999999 H335.5" stroke="#333" stroke-width="1.1"/><path d="M250 556.9 H335.5" stroke="#333" stroke-width="1.1"/><path d="M250 571.5999999999999 H335.5" stroke="#333" stroke-width="1.1"/></svg>
<div class="a" style="left:947px;top:463px;width:15px;height:123px;background:linear-gradient(90deg,#e6e6e6,#f2f2f2)"></div>
<svg class="a" style="left:950px;top:468px" width="9" height="5" viewBox="0 0 9 5"><path d="M0 5 L4.5 0 L9 5Z" fill="#333"/></svg>
<div class="a" style="left:948px;top:479px;width:13px;height:18px;background:linear-gradient(90deg,#ececec,#dedede 50%,#d0d0d0);border:1px solid #9a9a9a;border-radius:2px"></div>
<svg class="a" style="left:951px;top:485px" width="7" height="7" viewBox="0 0 7 7"><path d="M0 .5 H7 M0 3.5 H7 M0 6.5 H7" stroke="#666"/></svg>
<svg class="a" style="left:950px;top:576px" width="9" height="5" viewBox="0 0 9 5"><path d="M0 0 L4.5 5 L9 0Z" fill="#333"/></svg>
<div class="a" style="left:248px;top:586px;width:715px;height:17px;background:#ececec"></div>
<div class="a t" style="left:271px;top:589px;font-size:9px;color:#2a2aff">Sim</div>
<div class="a" style="left:291px;top:586.5px;width:43px;height:15px;background:#fff;border:1px solid #555"></div>
<div class="a t" style="left:293.5px;top:590px;font-size:9px;color:#2a2aff">0</div>
<svg class="a" style="left:341px;top:590px" width="5" height="8" viewBox="0 0 5 8"><path d="M5 0 L0 4 L5 8Z" fill="#333"/></svg>
<div class="a" style="left:352px;top:587px;width:15px;height:14px;background:linear-gradient(90deg,#f0f0f0,#dcdcdc);border:1px solid #9a9a9a;border-radius:2px"></div>
<svg class="a" style="left:356px;top:591px" width="7" height="7" viewBox="0 0 7 7"><path d="M.5 0 V7 M3.5 0 V7 M6.5 0 V7" stroke="#666"/></svg>
<svg class="a" style="left:940px;top:590px" width="5" height="8" viewBox="0 0 5 8"><path d="M0 0 L5 4 L0 8Z" fill="#333"/></svg>
<div class="a" style="left:226px;top:603px;width:737px;height:18px;background:#fff;border-top:1px solid #666;border-left:1px solid #a0a0a0"></div>
<div class="a t" style="left:231.5px;top:609px;font-size:8.8px;color:#777">Events</div>
<div class="a" style="left:261px;top:603px;width:97px;height:17px;background:#f0f0f0;border:1px solid #888;border-top:none"></div>
<div class="a t" style="left:263px;top:608.5px;font-size:8.8px;color:#111;letter-spacing:-0.25px">Graph. log - Protokoll_01</div>
<div class="a" style="left:7px;top:621px;width:958px;height:16px;background:#f0f0f0"></div>
<div class="a" style="left:8px;top:623px;width:71px;height:14px;border:1px solid #b8b8b8;border-right-color:#fff;border-bottom-color:#fff;box-shadow:inset 1px 1px 0 #e0e0e0"></div>
<div class="a" style="left:80px;top:623px;width:94px;height:14px;border:1px solid #b8b8b8;border-right-color:#fff;border-bottom-color:#fff;box-shadow:inset 1px 1px 0 #e0e0e0"></div>
<div class="a" style="left:175px;top:623px;width:84px;height:14px;border:1px solid #b8b8b8;border-right-color:#fff;border-bottom-color:#fff;box-shadow:inset 1px 1px 0 #e0e0e0"></div>
<div class="a" style="left:261px;top:623px;width:41px;height:14px;border:1px solid #b8b8b8;border-right-color:#fff;border-bottom-color:#fff;box-shadow:inset 1px 1px 0 #e0e0e0"></div>
<div class="a" style="left:303px;top:623px;width:590px;height:14px;border:1px solid #b8b8b8;border-right-color:#fff;border-bottom-color:#fff;box-shadow:inset 1px 1px 0 #e0e0e0"></div>
<div class="a" style="left:893px;top:623px;width:26px;height:14px;border:1px solid #b8b8b8;border-right-color:#fff;border-bottom-color:#fff;box-shadow:inset 1px 1px 0 #e0e0e0"></div>
<div class="a" style="left:920px;top:623px;width:22px;height:14px;border:1px solid #b8b8b8;border-right-color:#fff;border-bottom-color:#fff;box-shadow:inset 1px 1px 0 #e0e0e0"></div>
<div class="a t" style="left:20px;top:626px;font-size:8.8px;color:#111">Coordination</div>
<div class="a t" style="left:114px;top:626px;font-size:8.8px;color:#111">14 INT</div>
<div class="a t" style="left:267px;top:626px;font-size:8.8px;color:#111">Sim=189</div>
<div class="a t" style="left:305px;top:626px;font-size:8.8px;color:#2a2aff">185(14) : ST 5.1 run</div>
<div class="a t" style="left:895px;top:626px;font-size:8.8px;color:#111">STP 1</div>
<div class="a t" style="left:922px;top:626px;font-size:8.8px;color:#2a2aff">Tx=<b>17</b></div>
<svg class="a" style="left:950px;top:626px" width="12" height="11" viewBox="0 0 12 11"><path d="M11 2 L2 11 M11 5 L5 11 M11 8 L8 11" stroke="#999" stroke-width="1"/></svg>
<div class="a" style="left:0px;top:637px;width:972px;height:7px;background:linear-gradient(#5e5e5e 0,#5e5e5e 1px,#a6a6a6 1px,#a2a2a2 4px,#b4b4b4 5px,#9c9c9c 7px);border-left:1px solid #1a1a1a;border-right:1px solid #1a1a1a"></div>
</body></html>
